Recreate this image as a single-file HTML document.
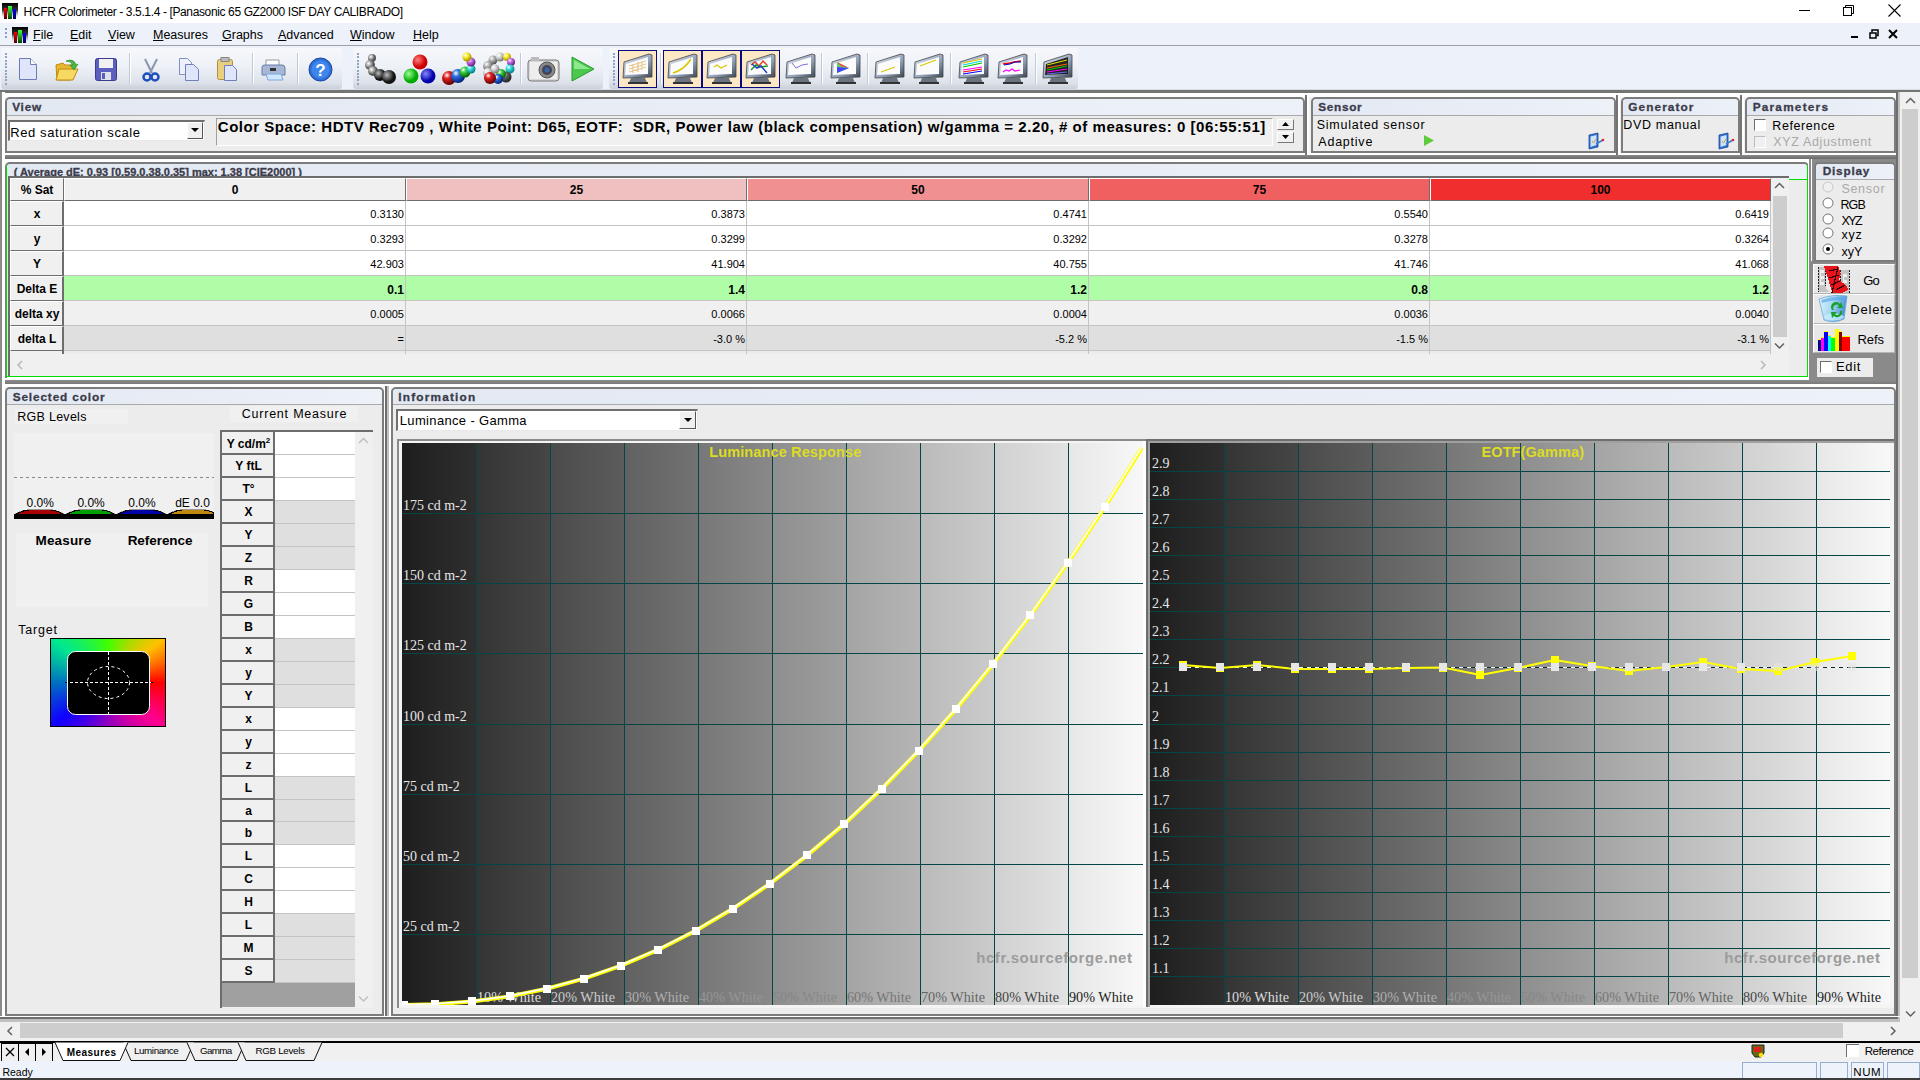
<!DOCTYPE html><html><head><meta charset="utf-8"><style>
html,body{margin:0;padding:0;width:1920px;height:1080px;overflow:hidden;background:#f0f0f0;}
body{position:relative;font-family:"Liberation Sans",sans-serif;font-size:12px;color:#000;}
div{box-sizing:border-box;}
.hd{font-weight:bold;color:#3c3c48;font-size:12px;}
</style></head><body>
<div style="position:absolute;left:0px;top:0px;width:1920px;height:23px;background:#fff;"></div>
<svg style="position:absolute;left:2px;top:3px" width="16" height="16" shape-rendering="crispEdges">
<defs><linearGradient id="aib2" x1="0" y1="0" x2="0" y2="1"><stop offset="0" stop-color="#000"/><stop offset="0.45" stop-color="#333"/><stop offset="1" stop-color="#fff" stop-opacity="0"/></linearGradient>
<linearGradient id="air2" x1="0" y1="0" x2="0" y2="1"><stop offset="0" stop-color="#ff0000"/><stop offset="1" stop-color="#500000"/></linearGradient>
<linearGradient id="aig2" x1="0" y1="0" x2="0" y2="1"><stop offset="0" stop-color="#40ff40"/><stop offset="1" stop-color="#004000"/></linearGradient>
<linearGradient id="aia2" x1="0" y1="0" x2="0" y2="1"><stop offset="0" stop-color="#0000ff"/><stop offset="1" stop-color="#000050"/></linearGradient></defs>
<rect x="0" y="0" width="16" height="16" fill="url(#aib2)"/>
<rect x="2" y="5" width="3" height="11" fill="url(#air2)"/><rect x="6" y="3" width="4" height="13" fill="url(#aig2)"/><rect x="11" y="6" width="3" height="10" fill="url(#aia2)"/></svg>
<div style="position:absolute;left:23.60px;top:5.20px;white-space:pre;font-size:12px;color:#000;letter-spacing:-0.373px;">HCFR Colorimeter - 3.5.1.4 - [Panasonic 65 GZ2000 ISF DAY CALIBRADO]</div>
<div style="position:absolute;left:1799px;top:10px;width:11px;height:1px;background:#000;"></div>
<svg style="position:absolute;left:1843px;top:5px" width="12" height="12"><rect x="0.5" y="2.5" width="8" height="8" fill="none" stroke="#000"/><path d="M2.5 2.5V0.5H10.5V8.5H8.5" fill="none" stroke="#000"/></svg>
<svg style="position:absolute;left:1888px;top:4px" width="13" height="13"><path d="M0.5 0.5L12.5 12.5M12.5 0.5L0.5 12.5" stroke="#000" stroke-width="1.1"/></svg>
<div style="position:absolute;left:0px;top:23px;width:1920px;height:22px;background:#edf1f9;"></div>
<div style="position:absolute;left:0px;top:45px;width:1920px;height:1px;background:#a0a0a0;"></div>
<div style="position:absolute;left:0px;top:46px;width:1920px;height:44px;background:#edf1f9;"></div>
<div style="position:absolute;left:5px;top:28px;width:2px;height:2px;background:#8aa0c0;"></div>
<div style="position:absolute;left:5px;top:32px;width:2px;height:2px;background:#8aa0c0;"></div>
<div style="position:absolute;left:5px;top:36px;width:2px;height:2px;background:#8aa0c0;"></div>
<svg style="position:absolute;left:12px;top:27px" width="16" height="16" shape-rendering="crispEdges">
<defs><linearGradient id="aib12" x1="0" y1="0" x2="0" y2="1"><stop offset="0" stop-color="#000"/><stop offset="0.45" stop-color="#333"/><stop offset="1" stop-color="#fff" stop-opacity="0"/></linearGradient>
<linearGradient id="air12" x1="0" y1="0" x2="0" y2="1"><stop offset="0" stop-color="#ff0000"/><stop offset="1" stop-color="#500000"/></linearGradient>
<linearGradient id="aig12" x1="0" y1="0" x2="0" y2="1"><stop offset="0" stop-color="#40ff40"/><stop offset="1" stop-color="#004000"/></linearGradient>
<linearGradient id="aia12" x1="0" y1="0" x2="0" y2="1"><stop offset="0" stop-color="#0000ff"/><stop offset="1" stop-color="#000050"/></linearGradient></defs>
<rect x="0" y="0" width="16" height="16" fill="url(#aib12)"/>
<rect x="2" y="5" width="3" height="11" fill="url(#air12)"/><rect x="6" y="3" width="4" height="13" fill="url(#aig12)"/><rect x="11" y="6" width="3" height="10" fill="url(#aia12)"/></svg>
<div style="position:absolute;left:33px;top:28px;font-size:12.5px;white-space:pre;"><u>F</u>ile</div>
<div style="position:absolute;left:70px;top:28px;font-size:12.5px;white-space:pre;"><u>E</u>dit</div>
<div style="position:absolute;left:108px;top:28px;font-size:12.5px;white-space:pre;"><u>V</u>iew</div>
<div style="position:absolute;left:153px;top:28px;font-size:12.5px;white-space:pre;"><u>M</u>easures</div>
<div style="position:absolute;left:222px;top:28px;font-size:12.5px;white-space:pre;"><u>G</u>raphs</div>
<div style="position:absolute;left:278px;top:28px;font-size:12.5px;white-space:pre;"><u>A</u>dvanced</div>
<div style="position:absolute;left:350px;top:28px;font-size:12.5px;white-space:pre;"><u>W</u>indow</div>
<div style="position:absolute;left:413px;top:28px;font-size:12.5px;white-space:pre;"><u>H</u>elp</div>
<div style="position:absolute;left:1851px;top:36px;width:7px;height:2px;background:#000;"></div>
<svg style="position:absolute;left:1869px;top:29px" width="10" height="10"><rect x="1" y="4" width="6" height="5" fill="none" stroke="#000" stroke-width="1.5"/><path d="M3 3.5V1H9V6.5H7.5" fill="none" stroke="#000" stroke-width="1.5"/></svg>
<svg style="position:absolute;left:1888px;top:29px" width="10" height="10"><path d="M1 1L9 9M9 1L1 9" stroke="#000" stroke-width="2"/></svg>
<div style="position:absolute;left:1px;top:48px;width:341px;height:41px;background:linear-gradient(#f6f8fc 0%,#eef1f7 45%,#dde2ea 85%,#c9ced8 100%);border-radius:3px 3px 3px 3px;"></div>
<div style="position:absolute;left:5px;top:53.0px;width:2px;height:2px;background:#8da4c6;"></div>
<div style="position:absolute;left:5px;top:56.3px;width:2px;height:2px;background:#8da4c6;"></div>
<div style="position:absolute;left:5px;top:59.6px;width:2px;height:2px;background:#8da4c6;"></div>
<div style="position:absolute;left:5px;top:62.9px;width:2px;height:2px;background:#8da4c6;"></div>
<div style="position:absolute;left:5px;top:66.2px;width:2px;height:2px;background:#8da4c6;"></div>
<div style="position:absolute;left:5px;top:69.5px;width:2px;height:2px;background:#8da4c6;"></div>
<div style="position:absolute;left:5px;top:72.8px;width:2px;height:2px;background:#8da4c6;"></div>
<div style="position:absolute;left:5px;top:76.1px;width:2px;height:2px;background:#8da4c6;"></div>
<div style="position:absolute;left:5px;top:79.4px;width:2px;height:2px;background:#8da4c6;"></div>
<div style="position:absolute;left:5px;top:82.7px;width:2px;height:2px;background:#8da4c6;"></div>
<div style="position:absolute;left:353px;top:48px;width:250px;height:41px;background:linear-gradient(#f6f8fc 0%,#eef1f7 45%,#dde2ea 85%,#c9ced8 100%);border-radius:3px 3px 3px 3px;"></div>
<div style="position:absolute;left:357px;top:53.0px;width:2px;height:2px;background:#8da4c6;"></div>
<div style="position:absolute;left:357px;top:56.3px;width:2px;height:2px;background:#8da4c6;"></div>
<div style="position:absolute;left:357px;top:59.6px;width:2px;height:2px;background:#8da4c6;"></div>
<div style="position:absolute;left:357px;top:62.9px;width:2px;height:2px;background:#8da4c6;"></div>
<div style="position:absolute;left:357px;top:66.2px;width:2px;height:2px;background:#8da4c6;"></div>
<div style="position:absolute;left:357px;top:69.5px;width:2px;height:2px;background:#8da4c6;"></div>
<div style="position:absolute;left:357px;top:72.8px;width:2px;height:2px;background:#8da4c6;"></div>
<div style="position:absolute;left:357px;top:76.1px;width:2px;height:2px;background:#8da4c6;"></div>
<div style="position:absolute;left:357px;top:79.4px;width:2px;height:2px;background:#8da4c6;"></div>
<div style="position:absolute;left:357px;top:82.7px;width:2px;height:2px;background:#8da4c6;"></div>
<div style="position:absolute;left:609px;top:48px;width:469px;height:41px;background:linear-gradient(#f6f8fc 0%,#eef1f7 45%,#dde2ea 85%,#c9ced8 100%);border-radius:3px 3px 3px 3px;"></div>
<div style="position:absolute;left:613px;top:53.0px;width:2px;height:2px;background:#8da4c6;"></div>
<div style="position:absolute;left:613px;top:56.3px;width:2px;height:2px;background:#8da4c6;"></div>
<div style="position:absolute;left:613px;top:59.6px;width:2px;height:2px;background:#8da4c6;"></div>
<div style="position:absolute;left:613px;top:62.9px;width:2px;height:2px;background:#8da4c6;"></div>
<div style="position:absolute;left:613px;top:66.2px;width:2px;height:2px;background:#8da4c6;"></div>
<div style="position:absolute;left:613px;top:69.5px;width:2px;height:2px;background:#8da4c6;"></div>
<div style="position:absolute;left:613px;top:72.8px;width:2px;height:2px;background:#8da4c6;"></div>
<div style="position:absolute;left:613px;top:76.1px;width:2px;height:2px;background:#8da4c6;"></div>
<div style="position:absolute;left:613px;top:79.4px;width:2px;height:2px;background:#8da4c6;"></div>
<div style="position:absolute;left:613px;top:82.7px;width:2px;height:2px;background:#8da4c6;"></div>
<div style="position:absolute;left:0px;top:89px;width:1920px;height:1px;background:#d8dce4;"></div>
<div style="position:absolute;left:0px;top:90px;width:1920px;height:3px;background:#747474;"></div>
<div style="position:absolute;left:0px;top:93px;width:1920px;height:2px;background:#fff;"></div>
<svg style="position:absolute;left:18px;top:57px" width="20" height="24"><path d="M1.5 1.5H12.5L18.5 7.5V22.5H1.5Z" fill="#dfe6fb" stroke="#6b7cb8"/><path d="M12.5 1.5V7.5H18.5" fill="#fff" stroke="#6b7cb8"/></svg>
<svg style="position:absolute;left:54px;top:57px" width="26" height="24"><path d="M2 8L9 6L11 8H20L17 23H3Z" fill="#e8b830" stroke="#c08a10"/><path d="M5 12H24L19 23H2Z" fill="#f7d860" stroke="#c08a10"/><path d="M12 4Q20 1 22 8L24 7L20 13L16 8L19 8Q17 4 12 4Z" fill="#4cb848" stroke="#2a8a2a" stroke-width="0.7"/></svg>
<svg style="position:absolute;left:95px;top:58px" width="22" height="23"><rect x="0.5" y="0.5" width="21" height="22" rx="2" fill="#5b5fbf" stroke="#3a3d8a"/><rect x="4" y="1" width="14" height="9" fill="#f0f0f0"/><rect x="6" y="14" width="10" height="8" fill="#e0e0e8"/><rect x="7" y="15" width="3" height="6" fill="#5b5fbf"/></svg>
<div style="position:absolute;left:129px;top:53px;width:1px;height:31px;background:#c3cad6;"></div>
<div style="position:absolute;left:130px;top:53px;width:1px;height:31px;background:#fff;"></div>
<svg style="position:absolute;left:142px;top:58px" width="18" height="24"><path d="M3 1L10 15M15 1L8 15" stroke="#8896b0" stroke-width="2"/><circle cx="5" cy="19" r="3.5" fill="none" stroke="#1e4fbf" stroke-width="2.5"/><circle cx="13" cy="19" r="3.5" fill="none" stroke="#1e4fbf" stroke-width="2.5"/></svg>
<svg style="position:absolute;left:178px;top:57px" width="22" height="25"><path d="M1.5 1.5H9.5L13.5 5.5V17.5H1.5Z" fill="#eef1fb" stroke="#8090c0"/><path d="M7.5 7.5H15.5L20.5 12.5V23.5H7.5Z" fill="#dfe6fb" stroke="#7080b8"/></svg>
<svg style="position:absolute;left:216px;top:57px" width="22" height="25"><rect x="1.5" y="2.5" width="15" height="20" rx="2" fill="#e9d080" stroke="#b09040"/><rect x="5" y="0.5" width="8" height="4" fill="#bbb" stroke="#888"/><path d="M8.5 8.5H16.5L20.5 12.5V23.5H8.5Z" fill="#dfe6fb" stroke="#7080b8"/></svg>
<div style="position:absolute;left:252px;top:53px;width:1px;height:31px;background:#c3cad6;"></div>
<div style="position:absolute;left:253px;top:53px;width:1px;height:31px;background:#fff;"></div>
<svg style="position:absolute;left:261px;top:58px" width="25" height="23"><path d="M5 2H18V10H5Z" fill="#fff" stroke="#999"/><path d="M1 9Q1 7 4 7H21Q24 7 24 10V17H1Z" fill="#a9b7d6" stroke="#6c7ca8"/><rect x="9" y="10" width="6" height="3" fill="#333"/><path d="M5 16H20L22 22H7Z" fill="#cfe8ff" stroke="#7fa6d8"/></svg>
<div style="position:absolute;left:297px;top:53px;width:1px;height:31px;background:#c3cad6;"></div>
<div style="position:absolute;left:298px;top:53px;width:1px;height:31px;background:#fff;"></div>
<svg style="position:absolute;left:308px;top:57px" width="25" height="25"><circle cx="12.5" cy="12.5" r="11.5" fill="#2f6fd8" stroke="#1a47a0"/><circle cx="12.5" cy="12.5" r="9" fill="#3f86ec"/><text x="12.5" y="19" font-family="Liberation Sans" font-weight="bold" font-size="17" fill="#fff" text-anchor="middle">?</text></svg>
<svg style="position:absolute;left:363px;top:52px" width="36" height="34">
<defs><radialGradient id="gb" cx="35%" cy="35%"><stop offset="0" stop-color="#fff"/><stop offset="1" stop-color="#555"/></radialGradient>
<radialGradient id="gk" cx="35%" cy="35%"><stop offset="0" stop-color="#bbb"/><stop offset="1" stop-color="#111"/></radialGradient></defs>
<circle cx="9" cy="6" r="4" fill="url(#gb)"/><circle cx="7" cy="13" r="5" fill="url(#gb)"/><circle cx="10" cy="19" r="5" fill="url(#gb)"/><circle cx="17" cy="23" r="6" fill="url(#gk)"/><circle cx="26" cy="25" r="7" fill="url(#gk)"/></svg>
<svg style="position:absolute;left:402px;top:52px" width="36" height="34">
<defs><radialGradient id="rr" cx="35%" cy="35%"><stop offset="0" stop-color="#ff8080"/><stop offset="1" stop-color="#c00"/></radialGradient>
<radialGradient id="rg" cx="35%" cy="35%"><stop offset="0" stop-color="#9f9"/><stop offset="1" stop-color="#0a0"/></radialGradient>
<radialGradient id="rb" cx="35%" cy="35%"><stop offset="0" stop-color="#88f"/><stop offset="1" stop-color="#00a"/></radialGradient></defs>
<circle cx="18" cy="10" r="7.5" fill="url(#rr)"/><circle cx="9" cy="24" r="7.5" fill="url(#rg)"/><circle cx="26" cy="24" r="7.5" fill="url(#rb)"/></svg>
<svg style="position:absolute;left:0;top:0" width="0" height="0"><defs><radialGradient id="g_ffee30" cx="35%" cy="30%" r="70%"><stop offset="0" stop-color="#fff"/><stop offset="0.35" stop-color="#ffee30"/><stop offset="1" stop-color="#a09000"/></radialGradient><radialGradient id="g_d070f0" cx="35%" cy="30%" r="70%"><stop offset="0" stop-color="#fff"/><stop offset="0.35" stop-color="#d070f0"/><stop offset="1" stop-color="#602080"/></radialGradient><radialGradient id="g_40e0e0" cx="35%" cy="30%" r="70%"><stop offset="0" stop-color="#fff"/><stop offset="0.35" stop-color="#40e0e0"/><stop offset="1" stop-color="#008080"/></radialGradient><radialGradient id="g_40d040" cx="35%" cy="30%" r="70%"><stop offset="0" stop-color="#fff"/><stop offset="0.35" stop-color="#40d040"/><stop offset="1" stop-color="#006000"/></radialGradient><radialGradient id="g_3070e0" cx="35%" cy="30%" r="70%"><stop offset="0" stop-color="#fff"/><stop offset="0.35" stop-color="#3070e0"/><stop offset="1" stop-color="#002080"/></radialGradient><radialGradient id="g_e02020" cx="35%" cy="30%" r="70%"><stop offset="0" stop-color="#fff"/><stop offset="0.35" stop-color="#e02020"/><stop offset="1" stop-color="#600000"/></radialGradient><radialGradient id="g_dddddd" cx="35%" cy="30%" r="70%"><stop offset="0" stop-color="#fff"/><stop offset="0.35" stop-color="#dddddd"/><stop offset="1" stop-color="#777"/></radialGradient><radialGradient id="g_bbbbbb" cx="35%" cy="30%" r="70%"><stop offset="0" stop-color="#fff"/><stop offset="0.35" stop-color="#bbbbbb"/><stop offset="1" stop-color="#555"/></radialGradient><radialGradient id="g_666666" cx="35%" cy="30%" r="70%"><stop offset="0" stop-color="#fff"/><stop offset="0.35" stop-color="#666666"/><stop offset="1" stop-color="#222"/></radialGradient></defs></svg>
<svg style="position:absolute;left:441px;top:52px" width="36" height="34"><circle cx="8" cy="26" r="7" fill="url(#g_e02020)"/><circle cx="17" cy="24" r="7" fill="url(#g_3070e0)"/><circle cx="24" cy="20" r="5.5" fill="url(#g_40d040)"/><circle cx="30" cy="17" r="4.5" fill="url(#g_40e0e0)"/><circle cx="30" cy="10" r="4.5" fill="url(#g_d070f0)"/><circle cx="26" cy="5" r="4.5" fill="url(#g_ffee30)"/></svg>
<svg style="position:absolute;left:480px;top:52px" width="36" height="34"><circle cx="13" cy="8" r="4.5" fill="url(#g_bbbbbb)"/><circle cx="20" cy="5" r="4.5" fill="url(#g_dddddd)"/><circle cx="27" cy="5" r="4" fill="url(#g_ffee30)"/><circle cx="31" cy="10" r="4" fill="url(#g_d070f0)"/><circle cx="30" cy="17" r="4.5" fill="url(#g_40e0e0)"/><circle cx="8" cy="14" r="5" fill="url(#g_bbbbbb)"/><circle cx="8" cy="21" r="5" fill="url(#g_dddddd)"/><circle cx="26" cy="25" r="5.5" fill="url(#g_666666)"/><circle cx="21" cy="22" r="5" fill="url(#g_40d040)"/><circle cx="18" cy="27" r="5" fill="url(#g_3070e0)"/><circle cx="10" cy="26" r="6" fill="url(#g_e02020)"/><circle cx="15" cy="17" r="4.5" fill="url(#g_dddddd)"/></svg>
<div style="position:absolute;left:520px;top:53px;width:1px;height:31px;background:#c3cad6;"></div>
<div style="position:absolute;left:521px;top:53px;width:1px;height:31px;background:#fff;"></div>
<svg style="position:absolute;left:527px;top:55px" width="34" height="30">
<rect x="1" y="5" width="31" height="21" rx="3" fill="#d8d8d8" stroke="#777"/><rect x="3" y="7" width="27" height="17" fill="#eee"/><circle cx="20" cy="15" r="8" fill="#888" stroke="#555"/><circle cx="20" cy="15" r="5" fill="#445"/><circle cx="20" cy="15" r="2.5" fill="#36a"/><rect x="4" y="2" width="8" height="4" fill="#bbb"/></svg>
<svg style="position:absolute;left:570px;top:55px" width="26" height="28"><path d="M2 2L24 14L2 26Z" fill="#4cc84c" stroke="#2a9a2a"/><path d="M4 5L20 14L4 14Z" fill="#8fe88f"/></svg>
<div style="position:absolute;left:618px;top:50px;width:39px;height:38px;background:#fde8c6;border:1.5px solid #0a0a80;"></div>
<svg style="position:absolute;left:621px;top:52px" width="33" height="34">
<defs><linearGradient id="mf618" x1="0" y1="0" x2="1" y2="1"><stop offset="0" stop-color="#e8eef8"/><stop offset="0.6" stop-color="#8fa0b8"/><stop offset="1" stop-color="#39424e"/></linearGradient></defs>
<path d="M3 10L28 2L31 3V25L2 26Z" fill="url(#mf618)" stroke="#444" stroke-width="0.8"/>
<path d="M5 12L27 5V22L4 23Z" fill="#fbfbfb"/>
<g stroke="#e8c890" stroke-width="1.2"><path d="M8 14L25 9M8 17L25 12M8 20L25 15M12 12V21M17 10V20M21 9V18"/></g>
<path d="M10 26H24L26 31H8Z" fill="#6a7480"/><rect x="7" y="30" width="20" height="2" fill="#333"/></svg>
<div style="position:absolute;left:660px;top:53px;width:1px;height:31px;background:#c3cad6;"></div>
<div style="position:absolute;left:661px;top:53px;width:1px;height:31px;background:#fff;"></div>
<div style="position:absolute;left:663px;top:50px;width:39px;height:38px;background:#fde8c6;border:1.5px solid #0a0a80;"></div>
<svg style="position:absolute;left:666px;top:52px" width="33" height="34">
<defs><linearGradient id="mf663" x1="0" y1="0" x2="1" y2="1"><stop offset="0" stop-color="#e8eef8"/><stop offset="0.6" stop-color="#8fa0b8"/><stop offset="1" stop-color="#39424e"/></linearGradient></defs>
<path d="M3 10L28 2L31 3V25L2 26Z" fill="url(#mf663)" stroke="#444" stroke-width="0.8"/>
<path d="M5 12L27 5V22L4 23Z" fill="#fbfbfb"/>
<path d="M7 21Q18 18 25 7" stroke="#d8c800" stroke-width="1.5" fill="none"/>
<path d="M10 26H24L26 31H8Z" fill="#6a7480"/><rect x="7" y="30" width="20" height="2" fill="#333"/></svg>
<div style="position:absolute;left:702px;top:50px;width:39px;height:38px;background:#fde8c6;border:1.5px solid #0a0a80;"></div>
<svg style="position:absolute;left:705px;top:52px" width="33" height="34">
<defs><linearGradient id="mf702" x1="0" y1="0" x2="1" y2="1"><stop offset="0" stop-color="#e8eef8"/><stop offset="0.6" stop-color="#8fa0b8"/><stop offset="1" stop-color="#39424e"/></linearGradient></defs>
<path d="M3 10L28 2L31 3V25L2 26Z" fill="url(#mf702)" stroke="#444" stroke-width="0.8"/>
<path d="M5 12L27 5V22L4 23Z" fill="#fbfbfb"/>
<path d="M9 15L12 13L16 16L20 14L22 13" stroke="#d8c800" stroke-width="1.3" fill="none"/>
<path d="M10 26H24L26 31H8Z" fill="#6a7480"/><rect x="7" y="30" width="20" height="2" fill="#333"/></svg>
<div style="position:absolute;left:741px;top:50px;width:39px;height:38px;background:#fde8c6;border:1.5px solid #0a0a80;"></div>
<svg style="position:absolute;left:744px;top:52px" width="33" height="34">
<defs><linearGradient id="mf741" x1="0" y1="0" x2="1" y2="1"><stop offset="0" stop-color="#e8eef8"/><stop offset="0.6" stop-color="#8fa0b8"/><stop offset="1" stop-color="#39424e"/></linearGradient></defs>
<path d="M3 10L28 2L31 3V25L2 26Z" fill="url(#mf741)" stroke="#444" stroke-width="0.8"/>
<path d="M5 12L27 5V22L4 23Z" fill="#fbfbfb"/>
<path d="M7 13L11 10L15 14L19 9L23 13" stroke="#e04020" stroke-width="1.5" fill="none"/><path d="M7 18L12 13L16 15L24 14" stroke="#20a020" stroke-width="1.5" fill="none"/><path d="M8 12L13 16L17 14L23 21" stroke="#2040c0" stroke-width="1.5" fill="none"/>
<path d="M10 26H24L26 31H8Z" fill="#6a7480"/><rect x="7" y="30" width="20" height="2" fill="#333"/></svg>
<svg style="position:absolute;left:784px;top:52px" width="33" height="34">
<defs><linearGradient id="mf781" x1="0" y1="0" x2="1" y2="1"><stop offset="0" stop-color="#e8eef8"/><stop offset="0.6" stop-color="#8fa0b8"/><stop offset="1" stop-color="#39424e"/></linearGradient></defs>
<path d="M3 10L28 2L31 3V25L2 26Z" fill="url(#mf781)" stroke="#444" stroke-width="0.8"/>
<path d="M5 12L27 5V22L4 23Z" fill="#fbfbfb"/>
<path d="M8 11L12 16L18 13L24 12" stroke="#8070e0" stroke-width="1" fill="none"/>
<path d="M10 26H24L26 31H8Z" fill="#6a7480"/><rect x="7" y="30" width="20" height="2" fill="#333"/></svg>
<div style="position:absolute;left:821px;top:53px;width:1px;height:31px;background:#c3cad6;"></div>
<div style="position:absolute;left:822px;top:53px;width:1px;height:31px;background:#fff;"></div>
<svg style="position:absolute;left:829px;top:52px" width="33" height="34">
<defs><linearGradient id="mf826" x1="0" y1="0" x2="1" y2="1"><stop offset="0" stop-color="#e8eef8"/><stop offset="0.6" stop-color="#8fa0b8"/><stop offset="1" stop-color="#39424e"/></linearGradient></defs>
<path d="M3 10L28 2L31 3V25L2 26Z" fill="url(#mf826)" stroke="#444" stroke-width="0.8"/>
<path d="M5 12L27 5V22L4 23Z" fill="#fbfbfb"/>
<path d="M8 10L20 16L8 21Z" fill="#6c6"/><path d="M8 10L20 16L12 14Z" fill="#f44"/><path d="M8 15L20 16L8 21Z" fill="#44f"/>
<path d="M10 26H24L26 31H8Z" fill="#6a7480"/><rect x="7" y="30" width="20" height="2" fill="#333"/></svg>
<div style="position:absolute;left:867px;top:53px;width:1px;height:31px;background:#c3cad6;"></div>
<div style="position:absolute;left:868px;top:53px;width:1px;height:31px;background:#fff;"></div>
<svg style="position:absolute;left:873px;top:52px" width="33" height="34">
<defs><linearGradient id="mf870" x1="0" y1="0" x2="1" y2="1"><stop offset="0" stop-color="#e8eef8"/><stop offset="0.6" stop-color="#8fa0b8"/><stop offset="1" stop-color="#39424e"/></linearGradient></defs>
<path d="M3 10L28 2L31 3V25L2 26Z" fill="url(#mf870)" stroke="#444" stroke-width="0.8"/>
<path d="M5 12L27 5V22L4 23Z" fill="#fbfbfb"/>
<path d="M8 20L22 15" stroke="#d8c800" stroke-width="1.2"/>
<path d="M10 26H24L26 31H8Z" fill="#6a7480"/><rect x="7" y="30" width="20" height="2" fill="#333"/></svg>
<svg style="position:absolute;left:912px;top:52px" width="33" height="34">
<defs><linearGradient id="mf909" x1="0" y1="0" x2="1" y2="1"><stop offset="0" stop-color="#e8eef8"/><stop offset="0.6" stop-color="#8fa0b8"/><stop offset="1" stop-color="#39424e"/></linearGradient></defs>
<path d="M3 10L28 2L31 3V25L2 26Z" fill="url(#mf909)" stroke="#444" stroke-width="0.8"/>
<path d="M5 12L27 5V22L4 23Z" fill="#fbfbfb"/>
<path d="M8 14L24 8" stroke="#d8c800" stroke-width="1.2"/>
<path d="M10 26H24L26 31H8Z" fill="#6a7480"/><rect x="7" y="30" width="20" height="2" fill="#333"/></svg>
<div style="position:absolute;left:950px;top:53px;width:1px;height:31px;background:#c3cad6;"></div>
<div style="position:absolute;left:951px;top:53px;width:1px;height:31px;background:#fff;"></div>
<svg style="position:absolute;left:957px;top:52px" width="33" height="34">
<defs><linearGradient id="mf954" x1="0" y1="0" x2="1" y2="1"><stop offset="0" stop-color="#e8eef8"/><stop offset="0.6" stop-color="#8fa0b8"/><stop offset="1" stop-color="#39424e"/></linearGradient></defs>
<path d="M3 10L28 2L31 3V25L2 26Z" fill="url(#mf954)" stroke="#444" stroke-width="0.8"/>
<path d="M5 12L27 5V22L4 23Z" fill="#fbfbfb"/>
<g stroke-width="1.2"><path d="M6 11L25 7" stroke="#d8c800"/><path d="M6 13L25 9" stroke="#0dd"/><path d="M6 15L25 11" stroke="#0c0"/><path d="M6 18L25 15" stroke="#f0f"/><path d="M6 20L25 17" stroke="#f00"/><path d="M6 22L25 19" stroke="#00f"/></g>
<path d="M10 26H24L26 31H8Z" fill="#6a7480"/><rect x="7" y="30" width="20" height="2" fill="#333"/></svg>
<svg style="position:absolute;left:996px;top:52px" width="33" height="34">
<defs><linearGradient id="mf993" x1="0" y1="0" x2="1" y2="1"><stop offset="0" stop-color="#e8eef8"/><stop offset="0.6" stop-color="#8fa0b8"/><stop offset="1" stop-color="#39424e"/></linearGradient></defs>
<path d="M3 10L28 2L31 3V25L2 26Z" fill="url(#mf993)" stroke="#444" stroke-width="0.8"/>
<path d="M5 12L27 5V22L4 23Z" fill="#fbfbfb"/>
<path d="M7 12L14 11L18 10L25 9" stroke="#e00" stroke-width="1.5"/><path d="M8 13L14 12L19 10L25 10" stroke="#00c" stroke-width="1" fill="none"/><path d="M7 20L10 18L13 19L16 17L19 19L24 18" stroke="#f0f" stroke-width="1.2" fill="none"/>
<path d="M10 26H24L26 31H8Z" fill="#6a7480"/><rect x="7" y="30" width="20" height="2" fill="#333"/></svg>
<div style="position:absolute;left:1035px;top:53px;width:1px;height:31px;background:#c3cad6;"></div>
<div style="position:absolute;left:1036px;top:53px;width:1px;height:31px;background:#fff;"></div>
<svg style="position:absolute;left:1041px;top:52px" width="33" height="34">
<defs><linearGradient id="mf1038" x1="0" y1="0" x2="1" y2="1"><stop offset="0" stop-color="#e8eef8"/><stop offset="0.6" stop-color="#8fa0b8"/><stop offset="1" stop-color="#39424e"/></linearGradient></defs>
<path d="M3 10L28 2L31 3V25L2 26Z" fill="url(#mf1038)" stroke="#444" stroke-width="0.8"/>
<path d="M5 12L27 5V22L4 23Z" fill="#fbfbfb"/>
<path d="M5 12L27 5V22L4 23Z" fill="#222"/><g stroke-width="1.1"><path d="M6 13L26 8" stroke="#dd0"/><path d="M6 16L26 12" stroke="#f60"/><path d="M6 18L26 14" stroke="#0c0"/><path d="M6 20L26 17" stroke="#f0f"/><path d="M6 22L26 20" stroke="#66f"/></g>
<path d="M10 26H24L26 31H8Z" fill="#6a7480"/><rect x="7" y="30" width="20" height="2" fill="#333"/></svg>
<div style="position:absolute;left:0px;top:94px;width:1900px;height:3px;background:#fff;"></div>
<div style="position:absolute;left:0px;top:153px;width:1900px;height:2px;background:#fff;"></div>
<div style="position:absolute;left:0px;top:155px;width:1900px;height:4px;background:linear-gradient(#8a8a8a,#6a6a6a);"></div>
<div style="position:absolute;left:0px;top:159px;width:1900px;height:3px;background:#fff;"></div>
<div style="position:absolute;left:0px;top:378px;width:1900px;height:2px;background:#fff;"></div>
<div style="position:absolute;left:0px;top:380px;width:1900px;height:4px;background:linear-gradient(#8c8c8c,#7a7a7a);"></div>
<div style="position:absolute;left:0px;top:384px;width:1900px;height:3px;background:#fff;"></div>
<div style="position:absolute;left:0px;top:92px;width:2px;height:930px;background:#8a8a8a;"></div>
<div style="position:absolute;left:2px;top:92px;width:3px;height:930px;background:#fff;"></div>
<div style="position:absolute;left:1896px;top:92px;width:2px;height:927px;background:#6e6e6e;"></div>
<div style="position:absolute;left:1898px;top:92px;width:3px;height:930px;background:#c0c0c0;"></div>
<div style="position:absolute;left:5px;top:97px;width:1300px;height:56px;background:#ececec;border:2px solid #7c7c7c;border-top-left-radius:5px;border-top-right-radius:5px;"></div>
<div style="position:absolute;left:7px;top:99px;width:1296px;height:17px;background:linear-gradient(90deg,#e3e9f3,#edf1f8);border-top-left-radius:4px;border-top-right-radius:4px;border-bottom:1px solid #a9a9a9;"></div>
<div style="position:absolute;left:12.20px;top:100.00px;white-space:pre;font-weight:bold;color:#3b3b4a;font-size:11.8px;-webkit-text-stroke:0.3px #3b3b4a;letter-spacing:0.767px;">View</div>
<div style="position:absolute;left:1305px;top:95px;width:2px;height:60px;background:#747474;"></div>
<div style="position:absolute;left:1307px;top:95px;width:2px;height:60px;background:#fff;"></div>
<div style="position:absolute;left:8px;top:120px;width:197px;height:21px;background:#fff;border-top:2px solid #6f6f6f;border-left:2px solid #6f6f6f;border-bottom:1px solid #e8e8e8;border-right:1px solid #e8e8e8;"></div>
<div style="position:absolute;left:10.30px;top:124.50px;white-space:pre;font-size:13px;letter-spacing:0.589px;">Red saturation scale</div>
<div style="position:absolute;left:187px;top:122px;width:16px;height:17px;background:#f0f0f0;border-right:1px solid #555;border-bottom:1px solid #555;border-top:1px solid #fff;border-left:1px solid #fff;"></div>
<svg style="position:absolute;left:191px;top:128px" width="8" height="5"><path d="M0 0H8L4 4Z" fill="#000"/></svg>
<div style="position:absolute;left:216px;top:118px;width:1057px;height:28px;background:#f0f0f0;border-left:1px solid #a0a0a0;border-top:1px solid #a0a0a0;border-right:1px solid #fff;border-bottom:1px solid #fff;"></div>
<div style="position:absolute;left:217.80px;top:118.00px;white-space:pre;font-size:15px;font-weight:bold;color:#000;letter-spacing:0.527px;">Color Space: HDTV Rec709 , White Point: D65, EOTF:  SDR, Power law (black compensation) w/gamma = 2.20, # of measures: 0 [06:55:51]</div>
<div style="position:absolute;left:1277px;top:119px;width:17px;height:11px;background:#f0f0f0;border-right:1px solid #777;border-bottom:1px solid #777;border-top:1px solid #fff;border-left:1px solid #fff;"></div>
<div style="position:absolute;left:1277px;top:132px;width:17px;height:11px;background:#f0f0f0;border-right:1px solid #777;border-bottom:1px solid #777;border-top:1px solid #fff;border-left:1px solid #fff;"></div>
<svg style="position:absolute;left:1282px;top:122px" width="7" height="4"><path d="M0 4H7L3.5 0Z" fill="#000"/></svg>
<svg style="position:absolute;left:1282px;top:135px" width="7" height="4"><path d="M0 0H7L3.5 4Z" fill="#000"/></svg>
<div style="position:absolute;left:1311px;top:97px;width:305px;height:56px;background:#ececec;border:2px solid #7c7c7c;border-top-left-radius:5px;border-top-right-radius:5px;"></div>
<div style="position:absolute;left:1313px;top:99px;width:301px;height:17px;background:linear-gradient(90deg,#e3e9f3,#edf1f8);border-top-left-radius:4px;border-top-right-radius:4px;border-bottom:1px solid #a9a9a9;"></div>
<div style="position:absolute;left:1318.30px;top:100.00px;white-space:pre;font-weight:bold;color:#3b3b4a;font-size:11.8px;-webkit-text-stroke:0.3px #3b3b4a;letter-spacing:0.660px;">Sensor</div>
<div style="position:absolute;left:1616px;top:95px;width:2px;height:60px;background:#747474;"></div>
<div style="position:absolute;left:1618px;top:95px;width:2px;height:60px;background:#fff;"></div>
<div style="position:absolute;left:1316.70px;top:117.70px;white-space:pre;font-size:12.5px;letter-spacing:0.753px;">Simulated sensor</div>
<div style="position:absolute;left:1318.30px;top:135.00px;white-space:pre;font-size:12.5px;letter-spacing:0.771px;">Adaptive</div>
<svg style="position:absolute;left:1423px;top:134px" width="12" height="13"><path d="M1 1L11 6.5L1 12Z" fill="#5ccc3c"/></svg>
<svg style="position:absolute;left:1587px;top:132px" width="18" height="18"><path d="M2 3L11 1V15L2 17Z" fill="#2f6fd0" stroke="#1b4a98" stroke-width="0.8"/><path d="M3.5 4.5L9.5 3V13L3.5 15Z" fill="#cfe4fa"/><path d="M5 9L6.5 11L9 7" stroke="#d8a030" fill="none"/><path d="M9 12L16 8" stroke="#3a7ad8" stroke-width="1.6"/><circle cx="16" cy="8" r="1.3" fill="#d03030"/></svg>
<div style="position:absolute;left:1621px;top:97px;width:119px;height:56px;background:#ececec;border:2px solid #7c7c7c;border-top-left-radius:5px;border-top-right-radius:5px;"></div>
<div style="position:absolute;left:1623px;top:99px;width:115px;height:17px;background:linear-gradient(90deg,#e3e9f3,#edf1f8);border-top-left-radius:4px;border-top-right-radius:4px;border-bottom:1px solid #a9a9a9;"></div>
<div style="position:absolute;left:1628.30px;top:100.00px;white-space:pre;font-weight:bold;color:#3b3b4a;font-size:11.8px;-webkit-text-stroke:0.3px #3b3b4a;letter-spacing:1.088px;">Generator</div>
<div style="position:absolute;left:1740px;top:95px;width:2px;height:60px;background:#747474;"></div>
<div style="position:absolute;left:1742px;top:95px;width:2px;height:60px;background:#fff;"></div>
<div style="position:absolute;left:1623.30px;top:117.70px;white-space:pre;font-size:12.5px;letter-spacing:0.667px;">DVD manual</div>
<svg style="position:absolute;left:1717px;top:132px" width="18" height="18"><path d="M2 3L11 1V15L2 17Z" fill="#2f6fd0" stroke="#1b4a98" stroke-width="0.8"/><path d="M3.5 4.5L9.5 3V13L3.5 15Z" fill="#cfe4fa"/><path d="M5 9L6.5 11L9 7" stroke="#d8a030" fill="none"/><path d="M9 12L16 8" stroke="#3a7ad8" stroke-width="1.6"/><circle cx="16" cy="8" r="1.3" fill="#d03030"/></svg>
<div style="position:absolute;left:1745px;top:97px;width:151px;height:56px;background:#ececec;border:2px solid #7c7c7c;border-top-left-radius:5px;border-top-right-radius:5px;"></div>
<div style="position:absolute;left:1747px;top:99px;width:147px;height:17px;background:linear-gradient(90deg,#e3e9f3,#edf1f8);border-top-left-radius:4px;border-top-right-radius:4px;border-bottom:1px solid #a9a9a9;"></div>
<div style="position:absolute;left:1752.70px;top:100.00px;white-space:pre;font-weight:bold;color:#3b3b4a;font-size:11.8px;-webkit-text-stroke:0.3px #3b3b4a;letter-spacing:1.222px;">Parameters</div>
<div style="position:absolute;left:1754px;top:119px;width:12px;height:12px;background:#fff;border-top:1px solid #6d6d6d;border-left:1px solid #6d6d6d;border-right:1px solid #fff;border-bottom:1px solid #fff;"></div>
<div style="position:absolute;left:1772.30px;top:118.70px;white-space:pre;font-size:12.5px;letter-spacing:0.588px;">Reference</div>
<div style="position:absolute;left:1754px;top:136px;width:12px;height:12px;background:#f0f0f0;border-top:1px solid #bdbdbd;border-left:1px solid #bdbdbd;border-right:1px solid #fff;border-bottom:1px solid #fff;"></div>
<div style="position:absolute;left:1773.30px;top:135.30px;white-space:pre;font-size:12.5px;color:#a8a8a8;letter-spacing:0.638px;">XYZ Adjustment</div>
<div style="position:absolute;left:5px;top:162px;width:1804px;height:216px;background:#ececec;border:2px solid #7c7c7c;border-top-left-radius:5px;border-top-right-radius:5px;"></div>
<div style="position:absolute;left:7px;top:164px;width:1800px;height:16px;background:linear-gradient(90deg,#e3e9f3,#edf1f8);border-top-left-radius:4px;border-top-right-radius:4px;"></div>
<div style="position:absolute;left:13.75px;top:165.80px;white-space:pre;font-size:11px;font-weight:bold;color:#3b3b4a;-webkit-text-stroke:0.3px #3b3b4a;letter-spacing:-0.005px;">( Average dE: 0.93 [0.59,0.38,0.35] max: 1.38 [CIE2000] )</div>
<div style="position:absolute;left:6px;top:165px;width:1px;height:212px;background:#00e000;"></div>
<div style="position:absolute;left:1807px;top:165px;width:1px;height:212px;background:#00e000;"></div>
<div style="position:absolute;left:6px;top:376px;width:1802px;height:1px;background:#00e000;"></div>
<div style="position:absolute;left:7px;top:377px;width:1801px;height:1px;background:#fff;"></div>
<div style="position:absolute;left:1789px;top:179px;width:18px;height:1px;background:#00e000;"></div>
<div style="position:absolute;left:8px;top:176px;width:1781px;height:200px;background:#f0f0f0;border-top:2px solid #6d6d6d;border-left:2px solid #6d6d6d;"></div>
<div style="position:absolute;left:10px;top:178px;width:54px;height:23px;background:#f0f0f0;border-top:1px solid #fff;border-left:1px solid #fff;border-right:1px solid #6d6d6d;border-bottom:1px solid #6d6d6d;"></div>
<div style="position:absolute;left:10px;top:183px;width:54px;text-align:center;font-weight:bold;font-size:12px;">% Sat</div>
<div style="position:absolute;left:64px;top:178px;width:342px;height:23px;background:#f0f0f0;border-top:1px solid #fff;border-left:1px solid #fff;border-right:1px solid #6d6d6d;border-bottom:1px solid #6d6d6d;"></div>
<div style="position:absolute;left:64px;top:183px;width:342px;text-align:center;font-weight:bold;font-size:12px;">0</div>
<div style="position:absolute;left:406px;top:178px;width:341px;height:23px;background:#f0c0c0;border-top:1px solid #fff;border-left:1px solid #fff;border-right:1px solid #6d6d6d;border-bottom:1px solid #6d6d6d;"></div>
<div style="position:absolute;left:406px;top:183px;width:341px;text-align:center;font-weight:bold;font-size:12px;">25</div>
<div style="position:absolute;left:747px;top:178px;width:342px;height:23px;background:#f09090;border-top:1px solid #fff;border-left:1px solid #fff;border-right:1px solid #6d6d6d;border-bottom:1px solid #6d6d6d;"></div>
<div style="position:absolute;left:747px;top:183px;width:342px;text-align:center;font-weight:bold;font-size:12px;">50</div>
<div style="position:absolute;left:1089px;top:178px;width:341px;height:23px;background:#f06060;border-top:1px solid #fff;border-left:1px solid #fff;border-right:1px solid #6d6d6d;border-bottom:1px solid #6d6d6d;"></div>
<div style="position:absolute;left:1089px;top:183px;width:341px;text-align:center;font-weight:bold;font-size:12px;">75</div>
<div style="position:absolute;left:1430px;top:178px;width:341px;height:23px;background:#f02e2e;border-top:1px solid #fff;border-left:1px solid #fff;border-right:1px solid #6d6d6d;border-bottom:1px solid #6d6d6d;"></div>
<div style="position:absolute;left:1430px;top:183px;width:341px;text-align:center;font-weight:bold;font-size:12px;">100</div>
<div style="position:absolute;left:10px;top:201px;width:54px;height:25px;background:#f0f0f0;border-top:1px solid #fff;border-left:1px solid #fff;border-right:2px solid #6d6d6d;border-bottom:1px solid #6d6d6d;"></div>
<div style="position:absolute;left:10px;top:207px;width:54px;text-align:center;font-weight:bold;font-size:12px;">x</div>
<div style="position:absolute;left:64px;top:201px;width:342px;height:25px;background:#fff;border-right:1px solid #c4c4c4;border-bottom:1px solid #c4c4c4;"></div>
<div style="position:absolute;left:64px;top:208px;width:340px;text-align:right;font-size:11px;">0.3130</div>
<div style="position:absolute;left:406px;top:201px;width:341px;height:25px;background:#fff;border-right:1px solid #c4c4c4;border-bottom:1px solid #c4c4c4;"></div>
<div style="position:absolute;left:406px;top:208px;width:339px;text-align:right;font-size:11px;">0.3873</div>
<div style="position:absolute;left:747px;top:201px;width:342px;height:25px;background:#fff;border-right:1px solid #c4c4c4;border-bottom:1px solid #c4c4c4;"></div>
<div style="position:absolute;left:747px;top:208px;width:340px;text-align:right;font-size:11px;">0.4741</div>
<div style="position:absolute;left:1089px;top:201px;width:341px;height:25px;background:#fff;border-right:1px solid #c4c4c4;border-bottom:1px solid #c4c4c4;"></div>
<div style="position:absolute;left:1089px;top:208px;width:339px;text-align:right;font-size:11px;">0.5540</div>
<div style="position:absolute;left:1430px;top:201px;width:341px;height:25px;background:#fff;border-right:1px solid #c4c4c4;border-bottom:1px solid #c4c4c4;"></div>
<div style="position:absolute;left:1430px;top:208px;width:339px;text-align:right;font-size:11px;">0.6419</div>
<div style="position:absolute;left:10px;top:226px;width:54px;height:25px;background:#f0f0f0;border-top:1px solid #fff;border-left:1px solid #fff;border-right:2px solid #6d6d6d;border-bottom:1px solid #6d6d6d;"></div>
<div style="position:absolute;left:10px;top:232px;width:54px;text-align:center;font-weight:bold;font-size:12px;">y</div>
<div style="position:absolute;left:64px;top:226px;width:342px;height:25px;background:#fff;border-right:1px solid #c4c4c4;border-bottom:1px solid #c4c4c4;"></div>
<div style="position:absolute;left:64px;top:233px;width:340px;text-align:right;font-size:11px;">0.3293</div>
<div style="position:absolute;left:406px;top:226px;width:341px;height:25px;background:#fff;border-right:1px solid #c4c4c4;border-bottom:1px solid #c4c4c4;"></div>
<div style="position:absolute;left:406px;top:233px;width:339px;text-align:right;font-size:11px;">0.3299</div>
<div style="position:absolute;left:747px;top:226px;width:342px;height:25px;background:#fff;border-right:1px solid #c4c4c4;border-bottom:1px solid #c4c4c4;"></div>
<div style="position:absolute;left:747px;top:233px;width:340px;text-align:right;font-size:11px;">0.3292</div>
<div style="position:absolute;left:1089px;top:226px;width:341px;height:25px;background:#fff;border-right:1px solid #c4c4c4;border-bottom:1px solid #c4c4c4;"></div>
<div style="position:absolute;left:1089px;top:233px;width:339px;text-align:right;font-size:11px;">0.3278</div>
<div style="position:absolute;left:1430px;top:226px;width:341px;height:25px;background:#fff;border-right:1px solid #c4c4c4;border-bottom:1px solid #c4c4c4;"></div>
<div style="position:absolute;left:1430px;top:233px;width:339px;text-align:right;font-size:11px;">0.3264</div>
<div style="position:absolute;left:10px;top:251px;width:54px;height:25px;background:#f0f0f0;border-top:1px solid #fff;border-left:1px solid #fff;border-right:2px solid #6d6d6d;border-bottom:1px solid #6d6d6d;"></div>
<div style="position:absolute;left:10px;top:257px;width:54px;text-align:center;font-weight:bold;font-size:12px;">Y</div>
<div style="position:absolute;left:64px;top:251px;width:342px;height:25px;background:#fff;border-right:1px solid #c4c4c4;border-bottom:1px solid #c4c4c4;"></div>
<div style="position:absolute;left:64px;top:258px;width:340px;text-align:right;font-size:11px;">42.903</div>
<div style="position:absolute;left:406px;top:251px;width:341px;height:25px;background:#fff;border-right:1px solid #c4c4c4;border-bottom:1px solid #c4c4c4;"></div>
<div style="position:absolute;left:406px;top:258px;width:339px;text-align:right;font-size:11px;">41.904</div>
<div style="position:absolute;left:747px;top:251px;width:342px;height:25px;background:#fff;border-right:1px solid #c4c4c4;border-bottom:1px solid #c4c4c4;"></div>
<div style="position:absolute;left:747px;top:258px;width:340px;text-align:right;font-size:11px;">40.755</div>
<div style="position:absolute;left:1089px;top:251px;width:341px;height:25px;background:#fff;border-right:1px solid #c4c4c4;border-bottom:1px solid #c4c4c4;"></div>
<div style="position:absolute;left:1089px;top:258px;width:339px;text-align:right;font-size:11px;">41.746</div>
<div style="position:absolute;left:1430px;top:251px;width:341px;height:25px;background:#fff;border-right:1px solid #c4c4c4;border-bottom:1px solid #c4c4c4;"></div>
<div style="position:absolute;left:1430px;top:258px;width:339px;text-align:right;font-size:11px;">41.068</div>
<div style="position:absolute;left:10px;top:276px;width:54px;height:25px;background:#f0f0f0;border-top:1px solid #fff;border-left:1px solid #fff;border-right:2px solid #6d6d6d;border-bottom:1px solid #6d6d6d;"></div>
<div style="position:absolute;left:10px;top:282px;width:54px;text-align:center;font-weight:bold;font-size:12px;">Delta E</div>
<div style="position:absolute;left:64px;top:276px;width:342px;height:25px;background:#b0fda8;border-right:1px solid #c4c4c4;border-bottom:1px solid #c4c4c4;"></div>
<div style="position:absolute;left:64px;top:283px;width:340px;text-align:right;font-weight:bold;font-size:12px;">0.1</div>
<div style="position:absolute;left:406px;top:276px;width:341px;height:25px;background:#b0fda8;border-right:1px solid #c4c4c4;border-bottom:1px solid #c4c4c4;"></div>
<div style="position:absolute;left:406px;top:283px;width:339px;text-align:right;font-weight:bold;font-size:12px;">1.4</div>
<div style="position:absolute;left:747px;top:276px;width:342px;height:25px;background:#b0fda8;border-right:1px solid #c4c4c4;border-bottom:1px solid #c4c4c4;"></div>
<div style="position:absolute;left:747px;top:283px;width:340px;text-align:right;font-weight:bold;font-size:12px;">1.2</div>
<div style="position:absolute;left:1089px;top:276px;width:341px;height:25px;background:#b0fda8;border-right:1px solid #c4c4c4;border-bottom:1px solid #c4c4c4;"></div>
<div style="position:absolute;left:1089px;top:283px;width:339px;text-align:right;font-weight:bold;font-size:12px;">0.8</div>
<div style="position:absolute;left:1430px;top:276px;width:341px;height:25px;background:#b0fda8;border-right:1px solid #c4c4c4;border-bottom:1px solid #c4c4c4;"></div>
<div style="position:absolute;left:1430px;top:283px;width:339px;text-align:right;font-weight:bold;font-size:12px;">1.2</div>
<div style="position:absolute;left:10px;top:301px;width:54px;height:25px;background:#f0f0f0;border-top:1px solid #fff;border-left:1px solid #fff;border-right:2px solid #6d6d6d;border-bottom:1px solid #6d6d6d;"></div>
<div style="position:absolute;left:10px;top:307px;width:54px;text-align:center;font-weight:bold;font-size:12px;">delta xy</div>
<div style="position:absolute;left:64px;top:301px;width:342px;height:25px;background:#f0f0f0;border-right:1px solid #c4c4c4;border-bottom:1px solid #c4c4c4;"></div>
<div style="position:absolute;left:64px;top:308px;width:340px;text-align:right;font-size:11px;">0.0005</div>
<div style="position:absolute;left:406px;top:301px;width:341px;height:25px;background:#f0f0f0;border-right:1px solid #c4c4c4;border-bottom:1px solid #c4c4c4;"></div>
<div style="position:absolute;left:406px;top:308px;width:339px;text-align:right;font-size:11px;">0.0066</div>
<div style="position:absolute;left:747px;top:301px;width:342px;height:25px;background:#f0f0f0;border-right:1px solid #c4c4c4;border-bottom:1px solid #c4c4c4;"></div>
<div style="position:absolute;left:747px;top:308px;width:340px;text-align:right;font-size:11px;">0.0004</div>
<div style="position:absolute;left:1089px;top:301px;width:341px;height:25px;background:#f0f0f0;border-right:1px solid #c4c4c4;border-bottom:1px solid #c4c4c4;"></div>
<div style="position:absolute;left:1089px;top:308px;width:339px;text-align:right;font-size:11px;">0.0036</div>
<div style="position:absolute;left:1430px;top:301px;width:341px;height:25px;background:#f0f0f0;border-right:1px solid #c4c4c4;border-bottom:1px solid #c4c4c4;"></div>
<div style="position:absolute;left:1430px;top:308px;width:339px;text-align:right;font-size:11px;">0.0040</div>
<div style="position:absolute;left:10px;top:326px;width:54px;height:25px;background:#f0f0f0;border-top:1px solid #fff;border-left:1px solid #fff;border-right:2px solid #6d6d6d;border-bottom:1px solid #6d6d6d;"></div>
<div style="position:absolute;left:10px;top:332px;width:54px;text-align:center;font-weight:bold;font-size:12px;">delta L</div>
<div style="position:absolute;left:64px;top:326px;width:342px;height:25px;background:#dfdfdf;border-right:1px solid #c4c4c4;border-bottom:1px solid #c4c4c4;"></div>
<div style="position:absolute;left:64px;top:333px;width:340px;text-align:right;font-size:11px;">=</div>
<div style="position:absolute;left:406px;top:326px;width:341px;height:25px;background:#dfdfdf;border-right:1px solid #c4c4c4;border-bottom:1px solid #c4c4c4;"></div>
<div style="position:absolute;left:406px;top:333px;width:339px;text-align:right;font-size:11px;">-3.0 %</div>
<div style="position:absolute;left:747px;top:326px;width:342px;height:25px;background:#dfdfdf;border-right:1px solid #c4c4c4;border-bottom:1px solid #c4c4c4;"></div>
<div style="position:absolute;left:747px;top:333px;width:340px;text-align:right;font-size:11px;">-5.2 %</div>
<div style="position:absolute;left:1089px;top:326px;width:341px;height:25px;background:#dfdfdf;border-right:1px solid #c4c4c4;border-bottom:1px solid #c4c4c4;"></div>
<div style="position:absolute;left:1089px;top:333px;width:339px;text-align:right;font-size:11px;">-1.5 %</div>
<div style="position:absolute;left:1430px;top:326px;width:341px;height:25px;background:#dfdfdf;border-right:1px solid #c4c4c4;border-bottom:1px solid #c4c4c4;"></div>
<div style="position:absolute;left:1430px;top:333px;width:339px;text-align:right;font-size:11px;">-3.1 %</div>
<div style="position:absolute;left:10px;top:351px;width:54px;height:3px;background:#f0f0f0;border-right:2px solid #6d6d6d;"></div>
<div style="position:absolute;left:64px;top:351px;width:342px;height:3px;background:#ececec;border-right:1px solid #c4c4c4;"></div>
<div style="position:absolute;left:406px;top:351px;width:341px;height:3px;background:#ececec;border-right:1px solid #c4c4c4;"></div>
<div style="position:absolute;left:747px;top:351px;width:342px;height:3px;background:#ececec;border-right:1px solid #c4c4c4;"></div>
<div style="position:absolute;left:1089px;top:351px;width:341px;height:3px;background:#ececec;border-right:1px solid #c4c4c4;"></div>
<div style="position:absolute;left:1430px;top:351px;width:341px;height:3px;background:#ececec;border-right:1px solid #c4c4c4;"></div>
<div style="position:absolute;left:10px;top:354px;width:1761px;height:20px;background:#f0f0f0;"></div>
<svg style="position:absolute;left:16px;top:360px" width="8" height="10"><path d="M6 1L2 5L6 9" stroke="#b8b8b8" stroke-width="1.5" fill="none"/></svg>
<svg style="position:absolute;left:1759px;top:360px" width="8" height="10"><path d="M2 1L6 5L2 9" stroke="#b8b8b8" stroke-width="1.5" fill="none"/></svg>
<div style="position:absolute;left:1771px;top:178px;width:18px;height:176px;background:#f0f0f0;"></div>
<div style="position:absolute;left:1773px;top:196px;width:14px;height:141px;background:#cdcdcd;"></div>
<svg style="position:absolute;left:1774px;top:182px" width="11" height="8"><path d="M1 6L5.5 1.5L10 6" stroke="#606060" stroke-width="1.5" fill="none"/></svg>
<svg style="position:absolute;left:1774px;top:342px" width="11" height="8"><path d="M1 1.5L5.5 6L10 1.5" stroke="#606060" stroke-width="1.5" fill="none"/></svg>
<div style="position:absolute;left:1808px;top:159px;width:1px;height:221px;background:#fff;"></div>
<div style="position:absolute;left:1809px;top:159px;width:87px;height:221px;background:#8a8a8a;"></div>
<div style="position:absolute;left:1811px;top:159px;width:1px;height:102px;background:#fff;"></div>
<div style="position:absolute;left:1814px;top:162px;width:82px;height:100px;background:#ececec;border:2px solid #7c7c7c;border-top-left-radius:5px;border-top-right-radius:5px;"></div>
<div style="position:absolute;left:1816px;top:164px;width:78px;height:16px;background:linear-gradient(90deg,#e3e9f3,#edf1f8);border-top-left-radius:4px;border-top-right-radius:4px;border-bottom:1px solid #a9a9a9;"></div>
<div style="position:absolute;left:1822.70px;top:164.30px;white-space:pre;font-weight:bold;color:#3b3b4a;font-size:11.8px;-webkit-text-stroke:0.3px #3b3b4a;letter-spacing:0.783px;">Display</div>
<div style="position:absolute;left:1822px;top:180.8px;width:66px;height:14px;background:#ececec;"></div>
<svg style="position:absolute;left:1822px;top:180.5px" width="12" height="12"><circle cx="6" cy="6" r="5" fill="#f0f0f0" stroke="#c8c8c8"/></svg>
<div style="position:absolute;left:1841.40px;top:181.80px;white-space:pre;font-size:12.5px;color:#a9a9a9;letter-spacing:0.720px;">Sensor</div>
<div style="position:absolute;left:1822px;top:197.1px;width:66px;height:14px;background:#ececec;"></div>
<svg style="position:absolute;left:1822px;top:196.79999999999998px" width="12" height="12"><circle cx="6" cy="6" r="5" fill="#fff" stroke="#777"/></svg>
<div style="position:absolute;left:1840.40px;top:198.10px;white-space:pre;font-size:12.5px;color:#000;letter-spacing:-0.800px;">RGB</div>
<div style="position:absolute;left:1822px;top:213.1px;width:66px;height:14px;background:#ececec;"></div>
<svg style="position:absolute;left:1822px;top:212.79999999999998px" width="12" height="12"><circle cx="6" cy="6" r="5" fill="#fff" stroke="#777"/></svg>
<div style="position:absolute;left:1841.40px;top:214.10px;white-space:pre;font-size:12.5px;color:#000;letter-spacing:-1.500px;">XYZ</div>
<div style="position:absolute;left:1822px;top:227px;width:66px;height:14px;background:#ececec;"></div>
<svg style="position:absolute;left:1822px;top:226.7px" width="12" height="12"><circle cx="6" cy="6" r="5" fill="#fff" stroke="#777"/></svg>
<div style="position:absolute;left:1841.40px;top:228.00px;white-space:pre;font-size:12.5px;color:#000;letter-spacing:0.750px;">xyz</div>
<div style="position:absolute;left:1822px;top:243.7px;width:66px;height:14px;background:#ececec;"></div>
<svg style="position:absolute;left:1822px;top:243.39999999999998px" width="12" height="12"><circle cx="6" cy="6" r="5" fill="#fff" stroke="#777"/><circle cx='6' cy='6' r='2' fill='#000'/></svg>
<div style="position:absolute;left:1841.40px;top:244.70px;white-space:pre;font-size:12.5px;color:#000;letter-spacing:0.000px;">xyY</div>
<div style="position:absolute;left:1812px;top:262px;width:84px;height:96px;background:#8a8a8a;"></div>
<div style="position:absolute;left:1813px;top:264px;width:82px;height:30px;background:#e8e8e8;border-top:1px solid #fff;border-left:1px solid #fff;border-bottom:1px solid #b4b4b4;border-right:1px solid #b4b4b4;"></div>
<div style="position:absolute;left:1813px;top:294px;width:82px;height:30px;background:#e8e8e8;border-top:1px solid #fff;border-left:1px solid #fff;border-bottom:1px solid #b4b4b4;border-right:1px solid #b4b4b4;"></div>
<div style="position:absolute;left:1813px;top:324px;width:82px;height:29px;background:#e8e8e8;border-top:1px solid #fff;border-left:1px solid #fff;border-bottom:1px solid #b4b4b4;border-right:1px solid #b4b4b4;"></div>
<svg style="position:absolute;left:1817px;top:266px" width="34" height="28" shape-rendering="crispEdges">
<path d="M1 1H9V22L12 26H1Z" fill="#c4c4c4"/><path d="M1.5 1V26M8.5 1V20" stroke="#222" stroke-dasharray="1.5,1.5"/>
<path d="M3 4H7V7H4V10H7V13H4V16H7V19H3Z" fill="#eee"/>
<path d="M23 4H32V27H26L23 22Z" fill="#c4c4c4"/><path d="M32.5 4V27M23.5 4V20" stroke="#222" stroke-dasharray="1.5,1.5"/>
<path d="M26 8H30V11H27V14H30V17H27V20H30V23H26Z" fill="#eee"/>
<path d="M7 0H21L24 8L22 14L30 20L31 24L25 27H16L13 20L11 12Z" fill="#e8141c"/>
<path d="M12 5L21 3M12 12L22 9M14 19L23 15M19 24L28 19M21 1L15 27" stroke="#300" stroke-width="1.2"/>
</svg>
<div style="position:absolute;left:1863.20px;top:272.90px;white-space:pre;font-size:13px;letter-spacing:-0.700px;">Go</div>
<svg style="position:absolute;left:1818px;top:295px" width="32" height="28">
<defs><linearGradient id="bin" x1="0" y1="0" x2="1" y2="0.3"><stop offset="0" stop-color="#e8f8ff"/><stop offset="0.5" stop-color="#a8d8f4"/><stop offset="1" stop-color="#4a94d0"/></linearGradient></defs>
<path d="M1 4Q14 -1 29 1L26 24Q16 29 6 25Z" fill="url(#bin)" stroke="#6aa8d8" stroke-width="0.8"/>
<path d="M3 5Q15 1 28 2L27 6Q15 4 4 8Z" fill="#5aa8e8" opacity="0.7"/>
<ellipse cx="16" cy="22" rx="10" ry="3.5" fill="#c8ecff" opacity="0.8"/>
<path d="M14 15A5 5 0 0 1 22 9L23 7L25 13L19 13L21 11A3 3 0 0 0 16 15Z" fill="#18a028"/>
<path d="M24 16A5 5 0 0 1 16 21L14 23L13 17L19 17L17 19A3 3 0 0 0 22 16Z" fill="#18a028"/>
</svg>
<div style="position:absolute;left:1850.20px;top:302.30px;white-space:pre;font-size:13px;letter-spacing:0.860px;">Delete</div>
<svg style="position:absolute;left:0;top:0" width="1920" height="400" shape-rendering="crispEdges"><rect x="1818" y="339" width="3" height="2" fill="#ffff00"/><rect x="1818" y="340" width="3" height="11" fill="#000080"/><rect x="1821" y="337" width="3" height="2" fill="#ffff00"/><rect x="1821" y="338" width="3" height="13" fill="#ff00ff"/><rect x="1824" y="331" width="4" height="2" fill="#ffff00"/><rect x="1824" y="332" width="4" height="19" fill="#0000ff"/><rect x="1828" y="335" width="3" height="2" fill="#ffff00"/><rect x="1828" y="336" width="3" height="15" fill="#00ffff"/><rect x="1831" y="337" width="4" height="2" fill="#ffff00"/><rect x="1831" y="338" width="4" height="13" fill="#00ff00"/><rect x="1835" y="329" width="4" height="2" fill="#ffff00"/><rect x="1835" y="330" width="4" height="21" fill="#ffff00"/><rect x="1839" y="331" width="3" height="2" fill="#ffff00"/><rect x="1839" y="332" width="3" height="19" fill="#800000"/><rect x="1842" y="336" width="8" height="2" fill="#ffff00"/><rect x="1842" y="337" width="8" height="14" fill="#ff0000"/></svg>
<div style="position:absolute;left:1857.40px;top:332.40px;white-space:pre;font-size:13px;letter-spacing:0.000px;">Refs</div>
<div style="position:absolute;left:1814px;top:356px;width:82px;height:22px;background:#8a8a8a;"></div>
<div style="position:absolute;left:1817px;top:358px;width:56px;height:19px;background:#ececec;"></div>
<div style="position:absolute;left:1820px;top:361px;width:12px;height:12px;background:#fff;border-top:1px solid #6d6d6d;border-left:1px solid #6d6d6d;border-right:1px solid #fff;border-bottom:1px solid #fff;"></div>
<div style="position:absolute;left:1836.00px;top:359.00px;white-space:pre;font-size:13px;letter-spacing:0.667px;">Edit</div>
<div style="position:absolute;left:5px;top:387px;width:379px;height:629px;background:#ececec;border:2px solid #7c7c7c;border-top-left-radius:5px;border-top-right-radius:5px;"></div>
<div style="position:absolute;left:7px;top:389px;width:375px;height:16px;background:linear-gradient(90deg,#e3e9f3,#edf1f8);border-top-left-radius:4px;border-top-right-radius:4px;border-bottom:1px solid #a9a9a9;"></div>
<div style="position:absolute;left:12.70px;top:389.70px;white-space:pre;font-weight:bold;color:#3b3b4a;font-size:11.8px;-webkit-text-stroke:0.3px #3b3b4a;letter-spacing:0.869px;">Selected color</div>
<div style="position:absolute;left:384px;top:386px;width:1px;height:631px;background:#fff;"></div>
<div style="position:absolute;left:385px;top:386px;width:2px;height:631px;background:#6e6e6e;"></div>
<div style="position:absolute;left:387px;top:386px;width:2px;height:631px;background:#c0c0c0;"></div>
<div style="position:absolute;left:389px;top:386px;width:2px;height:631px;background:#fff;"></div>
<div style="position:absolute;left:15px;top:409px;width:113px;height:15px;background:#f0f0f0;"></div>
<div style="position:absolute;left:17.30px;top:409.70px;white-space:pre;font-size:12.5px;letter-spacing:0.267px;">RGB Levels</div>
<div style="position:absolute;left:230px;top:406px;width:128px;height:16px;background:#f0f0f0;"></div>
<div style="position:absolute;left:241.70px;top:407.30px;white-space:pre;font-size:12.5px;letter-spacing:0.786px;">Current Measure</div>
<div style="position:absolute;left:14px;top:433px;width:200px;height:86px;background:#f0f0f0;"></div>
<svg style="position:absolute;left:14px;top:433px" width="200" height="86" shape-rendering="crispEdges"><path d="M0 44.5H200" stroke="#888" stroke-dasharray="3,3"/><path d="M0 81 L4 79 L9 77 L16 76 L35 76 L42 77 L47 79 L51 81 Z" fill="#000" stroke="#fff" stroke-width="0.6"/><path d="M4 81 L8 79 L12 78 L18 77 L34 77 L40 78 L44 79 L47 81 Z" fill="#a80000"/><path d="M51 81 L55 79 L60 77 L67 76 L86 76 L93 77 L98 79 L102 81 Z" fill="#000" stroke="#fff" stroke-width="0.6"/><path d="M55 81 L59 79 L63 78 L69 77 L85 77 L91 78 L95 79 L98 81 Z" fill="#00a000"/><path d="M102 81 L106 79 L111 77 L118 76 L137 76 L144 77 L149 79 L153 81 Z" fill="#000" stroke="#fff" stroke-width="0.6"/><path d="M106 81 L110 79 L114 78 L120 77 L136 77 L142 78 L146 79 L149 81 Z" fill="#0000a8"/><path d="M153 81 L157 79 L162 77 L169 76 L188 76 L195 77 L200 79 L204 81 Z" fill="#000" stroke="#fff" stroke-width="0.6"/><path d="M157 81 L161 79 L165 78 L171 77 L187 77 L193 78 L197 79 L200 81 Z" fill="#c08810"/><rect x="0" y="81" width="200" height="5" fill="#000"/></svg>
<div style="position:absolute;left:26.60px;top:495.80px;white-space:pre;font-family:"Liberation Serif",serif;font-size:11px;font-weight:bold;color:#1a1a2a;letter-spacing:-0.800px;">0.0%</div>
<div style="position:absolute;left:77.40px;top:495.80px;white-space:pre;font-family:"Liberation Serif",serif;font-size:11px;font-weight:bold;color:#1a1a2a;letter-spacing:-0.800px;">0.0%</div>
<div style="position:absolute;left:128.30px;top:495.80px;white-space:pre;font-family:"Liberation Serif",serif;font-size:11px;font-weight:bold;color:#1a1a2a;letter-spacing:-0.800px;">0.0%</div>
<div style="position:absolute;left:175.20px;top:495.80px;white-space:pre;font-family:"Liberation Serif",serif;font-size:11px;font-weight:bold;color:#1a1a2a;letter-spacing:-0.360px;">dE 0.0</div>
<div style="position:absolute;left:16px;top:533px;width:192px;height:74px;background:#f0f0f0;"></div>
<div style="position:absolute;left:35.60px;top:533.00px;white-space:pre;font-size:13.5px;font-weight:bold;letter-spacing:0.133px;">Measure</div>
<div style="position:absolute;left:127.70px;top:533.00px;white-space:pre;font-size:13.5px;font-weight:bold;letter-spacing:-0.062px;">Reference</div>
<div style="position:absolute;left:18.30px;top:623.00px;white-space:pre;font-size:12.5px;letter-spacing:0.800px;">Target</div>
<div style="position:absolute;left:50px;top:638px;width:116px;height:89px;background:conic-gradient(from 90deg at 50% 50%,#ff0000 0deg,#ff0090 38deg,#9000c0 90deg,#1000ff 142deg,#0070c0 180deg,#00e890 218deg,#40ff00 270deg,#ffc000 322deg,#ff0000 360deg);border:1px solid #000;"></div>
<svg style="position:absolute;left:50px;top:638px" width="116" height="89">
<rect x="17.5" y="13.5" width="82" height="63" rx="8" fill="#000" stroke="#fff"/>
<path d="M58.5 14V76" stroke="#fff" stroke-dasharray="3,2"/>
<path d="M15 44.5H103" stroke="#fff" stroke-dasharray="3,2"/>
<path d="M15 44.5H17M101 44.5H103" stroke="#000"/>
<ellipse cx="58.5" cy="44.5" rx="21" ry="16" fill="none" stroke="#fff" stroke-dasharray="3,3"/>
</svg>
<div style="position:absolute;left:220px;top:430px;width:153px;height:578px;background:#f0f0f0;border-top:2px solid #6d6d6d;border-left:2px solid #6d6d6d;"></div>
<div style="position:absolute;left:222px;top:432px;width:53px;height:23px;background:#f0f0f0;border-right:2px solid #6d6d6d;border-bottom:2px solid #6d6d6d;"></div>
<div style="position:absolute;left:275px;top:432px;width:80px;height:23px;background:#fff;border-bottom:1px solid #c4c4c4;"></div>
<div style="position:absolute;left:222px;top:436px;width:53px;text-align:center;font-weight:bold;font-size:12px;white-space:pre;">Y cd/m<sup style='font-size:8px'>2</sup></div>
<div style="position:absolute;left:222px;top:455px;width:53px;height:23px;background:#f0f0f0;border-right:2px solid #6d6d6d;border-bottom:2px solid #6d6d6d;"></div>
<div style="position:absolute;left:275px;top:455px;width:80px;height:23px;background:#fff;border-bottom:1px solid #c4c4c4;"></div>
<div style="position:absolute;left:222px;top:459px;width:53px;text-align:center;font-weight:bold;font-size:12px;white-space:pre;">Y ftL</div>
<div style="position:absolute;left:222px;top:478px;width:53px;height:23px;background:#f0f0f0;border-right:2px solid #6d6d6d;border-bottom:2px solid #6d6d6d;"></div>
<div style="position:absolute;left:275px;top:478px;width:80px;height:23px;background:#fff;border-bottom:1px solid #c4c4c4;"></div>
<div style="position:absolute;left:222px;top:482px;width:53px;text-align:center;font-weight:bold;font-size:12px;white-space:pre;">T°</div>
<div style="position:absolute;left:222px;top:501px;width:53px;height:23px;background:#f0f0f0;border-right:2px solid #6d6d6d;border-bottom:2px solid #6d6d6d;"></div>
<div style="position:absolute;left:275px;top:501px;width:80px;height:23px;background:#dfdfdf;border-bottom:1px solid #c4c4c4;"></div>
<div style="position:absolute;left:222px;top:505px;width:53px;text-align:center;font-weight:bold;font-size:12px;white-space:pre;">X</div>
<div style="position:absolute;left:222px;top:524px;width:53px;height:23px;background:#f0f0f0;border-right:2px solid #6d6d6d;border-bottom:2px solid #6d6d6d;"></div>
<div style="position:absolute;left:275px;top:524px;width:80px;height:23px;background:#dfdfdf;border-bottom:1px solid #c4c4c4;"></div>
<div style="position:absolute;left:222px;top:528px;width:53px;text-align:center;font-weight:bold;font-size:12px;white-space:pre;">Y</div>
<div style="position:absolute;left:222px;top:547px;width:53px;height:23px;background:#f0f0f0;border-right:2px solid #6d6d6d;border-bottom:2px solid #6d6d6d;"></div>
<div style="position:absolute;left:275px;top:547px;width:80px;height:23px;background:#dfdfdf;border-bottom:1px solid #c4c4c4;"></div>
<div style="position:absolute;left:222px;top:551px;width:53px;text-align:center;font-weight:bold;font-size:12px;white-space:pre;">Z</div>
<div style="position:absolute;left:222px;top:570px;width:53px;height:23px;background:#f0f0f0;border-right:2px solid #6d6d6d;border-bottom:2px solid #6d6d6d;"></div>
<div style="position:absolute;left:275px;top:570px;width:80px;height:23px;background:#fff;border-bottom:1px solid #c4c4c4;"></div>
<div style="position:absolute;left:222px;top:574px;width:53px;text-align:center;font-weight:bold;font-size:12px;white-space:pre;">R</div>
<div style="position:absolute;left:222px;top:593px;width:53px;height:23px;background:#f0f0f0;border-right:2px solid #6d6d6d;border-bottom:2px solid #6d6d6d;"></div>
<div style="position:absolute;left:275px;top:593px;width:80px;height:23px;background:#fff;border-bottom:1px solid #c4c4c4;"></div>
<div style="position:absolute;left:222px;top:597px;width:53px;text-align:center;font-weight:bold;font-size:12px;white-space:pre;">G</div>
<div style="position:absolute;left:222px;top:616px;width:53px;height:23px;background:#f0f0f0;border-right:2px solid #6d6d6d;border-bottom:2px solid #6d6d6d;"></div>
<div style="position:absolute;left:275px;top:616px;width:80px;height:23px;background:#fff;border-bottom:1px solid #c4c4c4;"></div>
<div style="position:absolute;left:222px;top:620px;width:53px;text-align:center;font-weight:bold;font-size:12px;white-space:pre;">B</div>
<div style="position:absolute;left:222px;top:639px;width:53px;height:23px;background:#f0f0f0;border-right:2px solid #6d6d6d;border-bottom:2px solid #6d6d6d;"></div>
<div style="position:absolute;left:275px;top:639px;width:80px;height:23px;background:#dfdfdf;border-bottom:1px solid #c4c4c4;"></div>
<div style="position:absolute;left:222px;top:643px;width:53px;text-align:center;font-weight:bold;font-size:12px;white-space:pre;">x</div>
<div style="position:absolute;left:222px;top:662px;width:53px;height:23px;background:#f0f0f0;border-right:2px solid #6d6d6d;border-bottom:2px solid #6d6d6d;"></div>
<div style="position:absolute;left:275px;top:662px;width:80px;height:23px;background:#dfdfdf;border-bottom:1px solid #c4c4c4;"></div>
<div style="position:absolute;left:222px;top:666px;width:53px;text-align:center;font-weight:bold;font-size:12px;white-space:pre;">y</div>
<div style="position:absolute;left:222px;top:685px;width:53px;height:23px;background:#f0f0f0;border-right:2px solid #6d6d6d;border-bottom:2px solid #6d6d6d;"></div>
<div style="position:absolute;left:275px;top:685px;width:80px;height:23px;background:#dfdfdf;border-bottom:1px solid #c4c4c4;"></div>
<div style="position:absolute;left:222px;top:689px;width:53px;text-align:center;font-weight:bold;font-size:12px;white-space:pre;">Y</div>
<div style="position:absolute;left:222px;top:708px;width:53px;height:23px;background:#f0f0f0;border-right:2px solid #6d6d6d;border-bottom:2px solid #6d6d6d;"></div>
<div style="position:absolute;left:275px;top:708px;width:80px;height:23px;background:#fff;border-bottom:1px solid #c4c4c4;"></div>
<div style="position:absolute;left:222px;top:712px;width:53px;text-align:center;font-weight:bold;font-size:12px;white-space:pre;">x</div>
<div style="position:absolute;left:222px;top:731px;width:53px;height:23px;background:#f0f0f0;border-right:2px solid #6d6d6d;border-bottom:2px solid #6d6d6d;"></div>
<div style="position:absolute;left:275px;top:731px;width:80px;height:23px;background:#fff;border-bottom:1px solid #c4c4c4;"></div>
<div style="position:absolute;left:222px;top:735px;width:53px;text-align:center;font-weight:bold;font-size:12px;white-space:pre;">y</div>
<div style="position:absolute;left:222px;top:754px;width:53px;height:23px;background:#f0f0f0;border-right:2px solid #6d6d6d;border-bottom:2px solid #6d6d6d;"></div>
<div style="position:absolute;left:275px;top:754px;width:80px;height:23px;background:#fff;border-bottom:1px solid #c4c4c4;"></div>
<div style="position:absolute;left:222px;top:758px;width:53px;text-align:center;font-weight:bold;font-size:12px;white-space:pre;">z</div>
<div style="position:absolute;left:222px;top:777px;width:53px;height:23px;background:#f0f0f0;border-right:2px solid #6d6d6d;border-bottom:2px solid #6d6d6d;"></div>
<div style="position:absolute;left:275px;top:777px;width:80px;height:23px;background:#dfdfdf;border-bottom:1px solid #c4c4c4;"></div>
<div style="position:absolute;left:222px;top:781px;width:53px;text-align:center;font-weight:bold;font-size:12px;white-space:pre;">L</div>
<div style="position:absolute;left:222px;top:800px;width:53px;height:22px;background:#f0f0f0;border-right:2px solid #6d6d6d;border-bottom:2px solid #6d6d6d;"></div>
<div style="position:absolute;left:275px;top:800px;width:80px;height:22px;background:#dfdfdf;border-bottom:1px solid #c4c4c4;"></div>
<div style="position:absolute;left:222px;top:804px;width:53px;text-align:center;font-weight:bold;font-size:12px;white-space:pre;">a</div>
<div style="position:absolute;left:222px;top:822px;width:53px;height:23px;background:#f0f0f0;border-right:2px solid #6d6d6d;border-bottom:2px solid #6d6d6d;"></div>
<div style="position:absolute;left:275px;top:822px;width:80px;height:23px;background:#dfdfdf;border-bottom:1px solid #c4c4c4;"></div>
<div style="position:absolute;left:222px;top:826px;width:53px;text-align:center;font-weight:bold;font-size:12px;white-space:pre;">b</div>
<div style="position:absolute;left:222px;top:845px;width:53px;height:23px;background:#f0f0f0;border-right:2px solid #6d6d6d;border-bottom:2px solid #6d6d6d;"></div>
<div style="position:absolute;left:275px;top:845px;width:80px;height:23px;background:#fff;border-bottom:1px solid #c4c4c4;"></div>
<div style="position:absolute;left:222px;top:849px;width:53px;text-align:center;font-weight:bold;font-size:12px;white-space:pre;">L</div>
<div style="position:absolute;left:222px;top:868px;width:53px;height:23px;background:#f0f0f0;border-right:2px solid #6d6d6d;border-bottom:2px solid #6d6d6d;"></div>
<div style="position:absolute;left:275px;top:868px;width:80px;height:23px;background:#fff;border-bottom:1px solid #c4c4c4;"></div>
<div style="position:absolute;left:222px;top:872px;width:53px;text-align:center;font-weight:bold;font-size:12px;white-space:pre;">C</div>
<div style="position:absolute;left:222px;top:891px;width:53px;height:23px;background:#f0f0f0;border-right:2px solid #6d6d6d;border-bottom:2px solid #6d6d6d;"></div>
<div style="position:absolute;left:275px;top:891px;width:80px;height:23px;background:#fff;border-bottom:1px solid #c4c4c4;"></div>
<div style="position:absolute;left:222px;top:895px;width:53px;text-align:center;font-weight:bold;font-size:12px;white-space:pre;">H</div>
<div style="position:absolute;left:222px;top:914px;width:53px;height:23px;background:#f0f0f0;border-right:2px solid #6d6d6d;border-bottom:2px solid #6d6d6d;"></div>
<div style="position:absolute;left:275px;top:914px;width:80px;height:23px;background:#dfdfdf;border-bottom:1px solid #c4c4c4;"></div>
<div style="position:absolute;left:222px;top:918px;width:53px;text-align:center;font-weight:bold;font-size:12px;white-space:pre;">L</div>
<div style="position:absolute;left:222px;top:937px;width:53px;height:23px;background:#f0f0f0;border-right:2px solid #6d6d6d;border-bottom:2px solid #6d6d6d;"></div>
<div style="position:absolute;left:275px;top:937px;width:80px;height:23px;background:#dfdfdf;border-bottom:1px solid #c4c4c4;"></div>
<div style="position:absolute;left:222px;top:941px;width:53px;text-align:center;font-weight:bold;font-size:12px;white-space:pre;">M</div>
<div style="position:absolute;left:222px;top:960px;width:53px;height:23px;background:#f0f0f0;border-right:2px solid #6d6d6d;border-bottom:2px solid #6d6d6d;"></div>
<div style="position:absolute;left:275px;top:960px;width:80px;height:23px;background:#dfdfdf;border-bottom:1px solid #c4c4c4;"></div>
<div style="position:absolute;left:222px;top:964px;width:53px;text-align:center;font-weight:bold;font-size:12px;white-space:pre;">S</div>
<div style="position:absolute;left:222px;top:983px;width:133px;height:24px;background:#a0a0a0;"></div>
<div style="position:absolute;left:355px;top:432px;width:17px;height:575px;background:#f0f0f0;"></div>
<svg style="position:absolute;left:358px;top:437px" width="11" height="8"><path d="M1 6L5.5 1.5L10 6" stroke="#c0c0c0" stroke-width="1.5" fill="none"/></svg>
<svg style="position:absolute;left:358px;top:995px" width="11" height="8"><path d="M1 1.5L5.5 6L10 1.5" stroke="#c0c0c0" stroke-width="1.5" fill="none"/></svg>
<div style="position:absolute;left:391px;top:387px;width:1505px;height:629px;background:#ececec;border:2px solid #7c7c7c;border-top-left-radius:5px;border-top-right-radius:5px;"></div>
<div style="position:absolute;left:393px;top:389px;width:1501px;height:16px;background:linear-gradient(90deg,#e3e9f3,#edf1f8);border-top-left-radius:4px;border-top-right-radius:4px;border-bottom:1px solid #a9a9a9;"></div>
<div style="position:absolute;left:398.30px;top:390.00px;white-space:pre;font-weight:bold;color:#3b3b4a;font-size:11.8px;-webkit-text-stroke:0.3px #3b3b4a;letter-spacing:1.200px;">Information</div>
<div style="position:absolute;left:396px;top:409px;width:302px;height:22px;background:#fff;border-top:2px solid #6f6f6f;border-left:2px solid #6f6f6f;border-bottom:1px solid #e8e8e8;border-right:1px solid #e8e8e8;"></div>
<div style="position:absolute;left:399.80px;top:413.10px;white-space:pre;font-size:13px;letter-spacing:0.338px;">Luminance - Gamma</div>
<div style="position:absolute;left:679px;top:411px;width:17px;height:18px;background:#f0f0f0;border-right:1px solid #555;border-bottom:1px solid #555;border-top:1px solid #fff;border-left:1px solid #fff;"></div>
<svg style="position:absolute;left:684px;top:418px" width="8" height="5"><path d="M0 0H8L4 4Z" fill="#000"/></svg>
<div style="position:absolute;left:397px;top:439px;width:1497px;height:569px;background:#f4f4f4;border-top:2px solid #8a8a8a;border-left:2px solid #8a8a8a;"></div>
<div style="position:absolute;left:402px;top:443px;width:74px;height:562px;background:linear-gradient(90deg,rgb(30,30,30),rgb(47,47,47));"></div>
<div style="position:absolute;left:476px;top:443px;width:74px;height:562px;background:linear-gradient(90deg,rgb(52,52,52),rgb(70,70,70));"></div>
<div style="position:absolute;left:550px;top:443px;width:74px;height:562px;background:linear-gradient(90deg,rgb(75,75,75),rgb(92,92,92));"></div>
<div style="position:absolute;left:624px;top:443px;width:74px;height:562px;background:linear-gradient(90deg,rgb(97,97,97),rgb(114,114,114));"></div>
<div style="position:absolute;left:698px;top:443px;width:74px;height:562px;background:linear-gradient(90deg,rgb(119,119,119),rgb(137,137,137));"></div>
<div style="position:absolute;left:772px;top:443px;width:74px;height:562px;background:linear-gradient(90deg,rgb(142,142,142),rgb(159,159,159));"></div>
<div style="position:absolute;left:846px;top:443px;width:74px;height:562px;background:linear-gradient(90deg,rgb(164,164,164),rgb(181,181,181));"></div>
<div style="position:absolute;left:920px;top:443px;width:74px;height:562px;background:linear-gradient(90deg,rgb(186,186,186),rgb(203,203,203));"></div>
<div style="position:absolute;left:994px;top:443px;width:74px;height:562px;background:linear-gradient(90deg,rgb(208,208,208),rgb(226,226,226));"></div>
<div style="position:absolute;left:1068px;top:443px;width:75px;height:562px;background:linear-gradient(90deg,rgb(231,231,231),rgb(248,248,248));"></div>
<svg style="position:absolute;left:402px;top:443px" width="741" height="562" shape-rendering="crispEdges"><path d="M74.5 0V562" stroke="#064545" stroke-width="1"/><path d="M148.5 0V562" stroke="#064545" stroke-width="1"/><path d="M222.5 0V562" stroke="#064545" stroke-width="1"/><path d="M296.5 0V562" stroke="#064545" stroke-width="1"/><path d="M370.5 0V562" stroke="#064545" stroke-width="1"/><path d="M444.5 0V562" stroke="#064545" stroke-width="1"/><path d="M518.5 0V562" stroke="#064545" stroke-width="1"/><path d="M592.5 0V562" stroke="#064545" stroke-width="1"/><path d="M666.5 0V562" stroke="#064545" stroke-width="1"/><path d="M0 70.5H741" stroke="#064545" stroke-width="1"/><path d="M0 140.5H741" stroke="#064545" stroke-width="1"/><path d="M0 210.5H741" stroke="#064545" stroke-width="1"/><path d="M0 281.5H741" stroke="#064545" stroke-width="1"/><path d="M0 351.5H741" stroke="#064545" stroke-width="1"/><path d="M0 421.5H741" stroke="#064545" stroke-width="1"/><path d="M0 491.5H741" stroke="#064545" stroke-width="1"/></svg>
<div style="position:absolute;left:477px;top:989px;font-family:&quot;Liberation Serif&quot;,serif;font-size:14.2px;color:rgb(221,221,221);white-space:pre;">10% White</div>
<div style="position:absolute;left:551px;top:989px;font-family:&quot;Liberation Serif&quot;,serif;font-size:14.2px;color:rgb(204,204,204);white-space:pre;">20% White</div>
<div style="position:absolute;left:625px;top:989px;font-family:&quot;Liberation Serif&quot;,serif;font-size:14.2px;color:rgb(175,175,175);white-space:pre;">30% White</div>
<div style="position:absolute;left:699px;top:989px;font-family:&quot;Liberation Serif&quot;,serif;font-size:14.2px;color:rgb(150,150,150);white-space:pre;">40% White</div>
<div style="position:absolute;left:773px;top:989px;font-family:&quot;Liberation Serif&quot;,serif;font-size:14.2px;color:rgb(135,135,135);white-space:pre;">50% White</div>
<div style="position:absolute;left:847px;top:989px;font-family:&quot;Liberation Serif&quot;,serif;font-size:14.2px;color:rgb(118,118,118);white-space:pre;">60% White</div>
<div style="position:absolute;left:921px;top:989px;font-family:&quot;Liberation Serif&quot;,serif;font-size:14.2px;color:rgb(100,100,100);white-space:pre;">70% White</div>
<div style="position:absolute;left:995px;top:989px;font-family:&quot;Liberation Serif&quot;,serif;font-size:14.2px;color:rgb(68,68,68);white-space:pre;">80% White</div>
<div style="position:absolute;left:1069px;top:989px;font-family:&quot;Liberation Serif&quot;,serif;font-size:14.2px;color:rgb(34,34,34);white-space:pre;">90% White</div>
<div style="position:absolute;left:1143px;top:441px;width:3px;height:566px;background:#fff;"></div>
<div style="position:absolute;left:1146px;top:439px;width:2px;height:568px;background:#6e6e6e;"></div>
<div style="position:absolute;left:1148px;top:441px;width:2px;height:566px;background:#a0a0a0;"></div>
<div style="position:absolute;left:1148px;top:439px;width:746px;height:2px;background:#6e6e6e;"></div>
<div style="position:absolute;left:1150px;top:441px;width:744px;height:2px;background:#a0a0a0;"></div>
<div style="position:absolute;left:1150px;top:443px;width:74px;height:562px;background:linear-gradient(90deg,rgb(30,30,30),rgb(47,47,47));"></div>
<div style="position:absolute;left:1224px;top:443px;width:74px;height:562px;background:linear-gradient(90deg,rgb(52,52,52),rgb(70,70,70));"></div>
<div style="position:absolute;left:1298px;top:443px;width:74px;height:562px;background:linear-gradient(90deg,rgb(75,75,75),rgb(92,92,92));"></div>
<div style="position:absolute;left:1372px;top:443px;width:74px;height:562px;background:linear-gradient(90deg,rgb(97,97,97),rgb(114,114,114));"></div>
<div style="position:absolute;left:1446px;top:443px;width:74px;height:562px;background:linear-gradient(90deg,rgb(119,119,119),rgb(137,137,137));"></div>
<div style="position:absolute;left:1520px;top:443px;width:74px;height:562px;background:linear-gradient(90deg,rgb(142,142,142),rgb(159,159,159));"></div>
<div style="position:absolute;left:1594px;top:443px;width:74px;height:562px;background:linear-gradient(90deg,rgb(164,164,164),rgb(181,181,181));"></div>
<div style="position:absolute;left:1668px;top:443px;width:74px;height:562px;background:linear-gradient(90deg,rgb(186,186,186),rgb(203,203,203));"></div>
<div style="position:absolute;left:1742px;top:443px;width:74px;height:562px;background:linear-gradient(90deg,rgb(208,208,208),rgb(226,226,226));"></div>
<div style="position:absolute;left:1816px;top:443px;width:74px;height:562px;background:linear-gradient(90deg,rgb(231,231,231),rgb(248,248,248));"></div>
<svg style="position:absolute;left:1150px;top:443px" width="740" height="562" shape-rendering="crispEdges"><path d="M74.5 0V562" stroke="#064545" stroke-width="1"/><path d="M148.5 0V562" stroke="#064545" stroke-width="1"/><path d="M222.5 0V562" stroke="#064545" stroke-width="1"/><path d="M296.5 0V562" stroke="#064545" stroke-width="1"/><path d="M370.5 0V562" stroke="#064545" stroke-width="1"/><path d="M444.5 0V562" stroke="#064545" stroke-width="1"/><path d="M518.5 0V562" stroke="#064545" stroke-width="1"/><path d="M592.5 0V562" stroke="#064545" stroke-width="1"/><path d="M666.5 0V562" stroke="#064545" stroke-width="1"/><path d="M0 28.5H740" stroke="#064545" stroke-width="1"/><path d="M0 56.5H740" stroke="#064545" stroke-width="1"/><path d="M0 84.5H740" stroke="#064545" stroke-width="1"/><path d="M0 112.5H740" stroke="#064545" stroke-width="1"/><path d="M0 140.5H740" stroke="#064545" stroke-width="1"/><path d="M0 168.5H740" stroke="#064545" stroke-width="1"/><path d="M0 196.5H740" stroke="#064545" stroke-width="1"/><path d="M0 224.5H740" stroke="#064545" stroke-width="1"/><path d="M0 252.5H740" stroke="#064545" stroke-width="1"/><path d="M0 281.5H740" stroke="#064545" stroke-width="1"/><path d="M0 309.5H740" stroke="#064545" stroke-width="1"/><path d="M0 337.5H740" stroke="#064545" stroke-width="1"/><path d="M0 365.5H740" stroke="#064545" stroke-width="1"/><path d="M0 393.5H740" stroke="#064545" stroke-width="1"/><path d="M0 421.5H740" stroke="#064545" stroke-width="1"/><path d="M0 449.5H740" stroke="#064545" stroke-width="1"/><path d="M0 477.5H740" stroke="#064545" stroke-width="1"/><path d="M0 505.5H740" stroke="#064545" stroke-width="1"/><path d="M0 533.5H740" stroke="#064545" stroke-width="1"/></svg>
<div style="position:absolute;left:1225px;top:989px;font-family:&quot;Liberation Serif&quot;,serif;font-size:14.2px;color:rgb(221,221,221);white-space:pre;">10% White</div>
<div style="position:absolute;left:1299px;top:989px;font-family:&quot;Liberation Serif&quot;,serif;font-size:14.2px;color:rgb(204,204,204);white-space:pre;">20% White</div>
<div style="position:absolute;left:1373px;top:989px;font-family:&quot;Liberation Serif&quot;,serif;font-size:14.2px;color:rgb(175,175,175);white-space:pre;">30% White</div>
<div style="position:absolute;left:1447px;top:989px;font-family:&quot;Liberation Serif&quot;,serif;font-size:14.2px;color:rgb(150,150,150);white-space:pre;">40% White</div>
<div style="position:absolute;left:1521px;top:989px;font-family:&quot;Liberation Serif&quot;,serif;font-size:14.2px;color:rgb(135,135,135);white-space:pre;">50% White</div>
<div style="position:absolute;left:1595px;top:989px;font-family:&quot;Liberation Serif&quot;,serif;font-size:14.2px;color:rgb(118,118,118);white-space:pre;">60% White</div>
<div style="position:absolute;left:1669px;top:989px;font-family:&quot;Liberation Serif&quot;,serif;font-size:14.2px;color:rgb(100,100,100);white-space:pre;">70% White</div>
<div style="position:absolute;left:1743px;top:989px;font-family:&quot;Liberation Serif&quot;,serif;font-size:14.2px;color:rgb(68,68,68);white-space:pre;">80% White</div>
<div style="position:absolute;left:1817px;top:989px;font-family:&quot;Liberation Serif&quot;,serif;font-size:14.2px;color:rgb(34,34,34);white-space:pre;">90% White</div>
<div style="position:absolute;left:403px;top:497.5px;font-family:&quot;Liberation Serif&quot;,serif;font-size:14px;color:#e6e6e6;white-space:pre;">175 cd m-2</div>
<div style="position:absolute;left:403px;top:567.5px;font-family:&quot;Liberation Serif&quot;,serif;font-size:14px;color:#e6e6e6;white-space:pre;">150 cd m-2</div>
<div style="position:absolute;left:403px;top:637.5px;font-family:&quot;Liberation Serif&quot;,serif;font-size:14px;color:#e6e6e6;white-space:pre;">125 cd m-2</div>
<div style="position:absolute;left:403px;top:708.5px;font-family:&quot;Liberation Serif&quot;,serif;font-size:14px;color:#e6e6e6;white-space:pre;">100 cd m-2</div>
<div style="position:absolute;left:403px;top:778.5px;font-family:&quot;Liberation Serif&quot;,serif;font-size:14px;color:#e6e6e6;white-space:pre;">75 cd m-2</div>
<div style="position:absolute;left:403px;top:848.5px;font-family:&quot;Liberation Serif&quot;,serif;font-size:14px;color:#e6e6e6;white-space:pre;">50 cd m-2</div>
<div style="position:absolute;left:403px;top:918.5px;font-family:&quot;Liberation Serif&quot;,serif;font-size:14px;color:#e6e6e6;white-space:pre;">25 cd m-2</div>
<div style="position:absolute;left:709.20px;top:443.70px;white-space:pre;font-size:14.5px;font-weight:bold;color:#dcdc20;letter-spacing:0.129px;">Luminance Response</div>
<div style="position:absolute;left:976.20px;top:948.50px;white-space:pre;font-size:15px;font-weight:bold;color:#9c9c9c;letter-spacing:0.568px;">hcfr.sourceforge.net</div>
<div style="position:absolute;left:1152px;top:455.5px;font-family:&quot;Liberation Serif&quot;,serif;font-size:14px;color:#e6e6e6;white-space:pre;">2.9</div>
<div style="position:absolute;left:1152px;top:483.5px;font-family:&quot;Liberation Serif&quot;,serif;font-size:14px;color:#e6e6e6;white-space:pre;">2.8</div>
<div style="position:absolute;left:1152px;top:511.5px;font-family:&quot;Liberation Serif&quot;,serif;font-size:14px;color:#e6e6e6;white-space:pre;">2.7</div>
<div style="position:absolute;left:1152px;top:539.5px;font-family:&quot;Liberation Serif&quot;,serif;font-size:14px;color:#e6e6e6;white-space:pre;">2.6</div>
<div style="position:absolute;left:1152px;top:567.5px;font-family:&quot;Liberation Serif&quot;,serif;font-size:14px;color:#e6e6e6;white-space:pre;">2.5</div>
<div style="position:absolute;left:1152px;top:595.5px;font-family:&quot;Liberation Serif&quot;,serif;font-size:14px;color:#e6e6e6;white-space:pre;">2.4</div>
<div style="position:absolute;left:1152px;top:623.5px;font-family:&quot;Liberation Serif&quot;,serif;font-size:14px;color:#e6e6e6;white-space:pre;">2.3</div>
<div style="position:absolute;left:1152px;top:651.5px;font-family:&quot;Liberation Serif&quot;,serif;font-size:14px;color:#e6e6e6;white-space:pre;">2.2</div>
<div style="position:absolute;left:1152px;top:679.5px;font-family:&quot;Liberation Serif&quot;,serif;font-size:14px;color:#e6e6e6;white-space:pre;">2.1</div>
<div style="position:absolute;left:1152px;top:708.5px;font-family:&quot;Liberation Serif&quot;,serif;font-size:14px;color:#e6e6e6;white-space:pre;">2</div>
<div style="position:absolute;left:1152px;top:736.5px;font-family:&quot;Liberation Serif&quot;,serif;font-size:14px;color:#e6e6e6;white-space:pre;">1.9</div>
<div style="position:absolute;left:1152px;top:764.5px;font-family:&quot;Liberation Serif&quot;,serif;font-size:14px;color:#e6e6e6;white-space:pre;">1.8</div>
<div style="position:absolute;left:1152px;top:792.5px;font-family:&quot;Liberation Serif&quot;,serif;font-size:14px;color:#e6e6e6;white-space:pre;">1.7</div>
<div style="position:absolute;left:1152px;top:820.5px;font-family:&quot;Liberation Serif&quot;,serif;font-size:14px;color:#e6e6e6;white-space:pre;">1.6</div>
<div style="position:absolute;left:1152px;top:848.5px;font-family:&quot;Liberation Serif&quot;,serif;font-size:14px;color:#e6e6e6;white-space:pre;">1.5</div>
<div style="position:absolute;left:1152px;top:876.5px;font-family:&quot;Liberation Serif&quot;,serif;font-size:14px;color:#e6e6e6;white-space:pre;">1.4</div>
<div style="position:absolute;left:1152px;top:904.5px;font-family:&quot;Liberation Serif&quot;,serif;font-size:14px;color:#e6e6e6;white-space:pre;">1.3</div>
<div style="position:absolute;left:1152px;top:932.5px;font-family:&quot;Liberation Serif&quot;,serif;font-size:14px;color:#e6e6e6;white-space:pre;">1.2</div>
<div style="position:absolute;left:1152px;top:960.5px;font-family:&quot;Liberation Serif&quot;,serif;font-size:14px;color:#e6e6e6;white-space:pre;">1.1</div>
<div style="position:absolute;left:1481.50px;top:443.70px;white-space:pre;font-size:14.5px;font-weight:bold;color:#dcdc20;letter-spacing:0.100px;">EOTF(Gamma)</div>
<div style="position:absolute;left:1724.20px;top:948.50px;white-space:pre;font-size:15px;font-weight:bold;color:#9c9c9c;letter-spacing:0.568px;">hcfr.sourceforge.net</div>
<svg style="position:absolute;left:0;top:0" width="1920" height="1080"><clipPath id="clipL"><rect x="402" y="443" width="741" height="562"/></clipPath><g clip-path="url(#clipL)"><path d="M404.0 1005.0 L435.2 1004.2 L472.4 1001.5 L509.6 996.4 L546.8 988.8 L584.0 978.6 L621.2 965.6 L658.4 949.7 L695.6 930.8 L732.8 908.8 L770.0 883.7 L807.2 855.4 L844.4 823.9 L881.6 789.0 L918.8 750.8 L956.0 709.1 L993.2 663.9 L1030.4 615.3 L1067.6 563.1 L1104.8 507.2 L1142.0 447.8" stroke="#ffff00" stroke-width="4" fill="none"/><path d="M403.6 1004.6 L434.8 1003.8 L472.0 1001.1 L509.2 996.0 L546.4 988.4 L583.6 978.2 L620.8 965.2 L658.0 949.3 L695.2 930.4 L732.4 908.4 L769.6 883.3 L806.8 855.0 L844.0 823.5 L881.2 788.6 L918.4 750.4 L955.6 708.7 L992.8 663.5 L1030.0 614.9 L1067.2 562.7 L1104.4 506.8 L1141.6 447.4" stroke="#fff" stroke-width="1.6" fill="none"/><rect x="400" y="1001" width="8" height="8" fill="#fff"/><rect x="431" y="1000" width="8" height="8" fill="#fff"/><rect x="468" y="997" width="8" height="8" fill="#fff"/><rect x="506" y="992" width="8" height="8" fill="#fff"/><rect x="543" y="985" width="8" height="8" fill="#fff"/><rect x="580" y="975" width="8" height="8" fill="#fff"/><rect x="617" y="962" width="8" height="8" fill="#fff"/><rect x="654" y="946" width="8" height="8" fill="#fff"/><rect x="692" y="927" width="8" height="8" fill="#fff"/><rect x="729" y="905" width="8" height="8" fill="#fff"/><rect x="766" y="880" width="8" height="8" fill="#fff"/><rect x="803" y="851" width="8" height="8" fill="#fff"/><rect x="840" y="820" width="8" height="8" fill="#fff"/><rect x="878" y="785" width="8" height="8" fill="#fff"/><rect x="915" y="747" width="8" height="8" fill="#fff"/><rect x="952" y="705" width="8" height="8" fill="#fff"/><rect x="989" y="660" width="8" height="8" fill="#fff"/><rect x="1026" y="611" width="8" height="8" fill="#fff"/><rect x="1064" y="559" width="8" height="8" fill="#fff"/><rect x="1101" y="503" width="8" height="8" fill="#fff"/></g><path d="M1183 667.5H1852" stroke="#0a2a2a" stroke-width="1" stroke-dasharray="4,4" shape-rendering="crispEdges"/><path d="M1187 667.5H1852" stroke="#f4f4f4" stroke-width="1" stroke-dasharray="4,4" shape-rendering="crispEdges"/><path d="M1183.0 665.0 L1220.2 668.0 L1257.3 665.0 L1294.5 669.0 L1331.7 669.0 L1368.8 669.0 L1406.0 668.0 L1443.2 667.5 L1480.4 675.0 L1517.5 668.0 L1554.7 660.0 L1591.9 666.0 L1629.0 671.0 L1666.2 667.0 L1703.4 662.0 L1740.6 669.0 L1777.7 671.0 L1814.9 662.0 L1852.1 656.0" stroke="#ffff00" stroke-width="2" fill="none"/><rect x="1179" y="661" width="8" height="8" fill="#ffff00"/><rect x="1216" y="664" width="8" height="8" fill="#ffff00"/><rect x="1253" y="661" width="8" height="8" fill="#ffff00"/><rect x="1291" y="665" width="8" height="8" fill="#ffff00"/><rect x="1328" y="665" width="8" height="8" fill="#ffff00"/><rect x="1365" y="665" width="8" height="8" fill="#ffff00"/><rect x="1402" y="664" width="8" height="8" fill="#ffff00"/><rect x="1439" y="664" width="8" height="8" fill="#ffff00"/><rect x="1476" y="671" width="8" height="8" fill="#ffff00"/><rect x="1514" y="664" width="8" height="8" fill="#ffff00"/><rect x="1551" y="656" width="8" height="8" fill="#ffff00"/><rect x="1588" y="662" width="8" height="8" fill="#ffff00"/><rect x="1625" y="667" width="8" height="8" fill="#ffff00"/><rect x="1662" y="663" width="8" height="8" fill="#ffff00"/><rect x="1699" y="658" width="8" height="8" fill="#ffff00"/><rect x="1737" y="665" width="8" height="8" fill="#ffff00"/><rect x="1774" y="667" width="8" height="8" fill="#ffff00"/><rect x="1811" y="658" width="8" height="8" fill="#ffff00"/><rect x="1848" y="652" width="8" height="8" fill="#ffff00"/><rect x="1179" y="663" width="8" height="8" fill="#e6e6e6" opacity="1"/><rect x="1216" y="663" width="8" height="8" fill="#e6e6e6" opacity="1"/><rect x="1253" y="663" width="8" height="8" fill="#e6e6e6" opacity="1"/><rect x="1291" y="663" width="8" height="8" fill="#e6e6e6" opacity="1"/><rect x="1328" y="663" width="8" height="8" fill="#e6e6e6" opacity="1"/><rect x="1365" y="663" width="8" height="8" fill="#e6e6e6" opacity="1"/><rect x="1402" y="663" width="8" height="8" fill="#e6e6e6" opacity="1"/><rect x="1439" y="663" width="8" height="8" fill="#e6e6e6" opacity="1"/><rect x="1476" y="663" width="8" height="8" fill="#e6e6e6" opacity="1"/><rect x="1514" y="663" width="8" height="8" fill="#e6e6e6" opacity="1"/><rect x="1551" y="663" width="8" height="8" fill="#e6e6e6" opacity="1"/><rect x="1588" y="663" width="8" height="8" fill="#e6e6e6" opacity="1"/><rect x="1625" y="663" width="8" height="8" fill="#e6e6e6" opacity="1"/><rect x="1662" y="663" width="8" height="8" fill="#e6e6e6" opacity="1"/><rect x="1699" y="663" width="8" height="8" fill="#e6e6e6" opacity="1"/><rect x="1737" y="663" width="8" height="8" fill="#e6e6e6" opacity="1"/><rect x="1774" y="663" width="8" height="8" fill="#e6e6e6" opacity="0.55"/><rect x="1811" y="663" width="8" height="8" fill="#e6e6e6" opacity="0.55"/><rect x="1848" y="663" width="8" height="8" fill="#e6e6e6" opacity="0.55"/></svg>
<div style="position:absolute;left:0px;top:1016px;width:1900px;height:1px;background:#fff;"></div>
<div style="position:absolute;left:0px;top:1017px;width:1898px;height:2px;background:#6e6e6e;"></div>
<div style="position:absolute;left:0px;top:1019px;width:1901px;height:3px;background:#c0c0c0;"></div>
<div style="position:absolute;left:0px;top:1022px;width:1901px;height:1px;background:#fff;"></div>
<div style="position:absolute;left:0px;top:1022px;width:1920px;height:17px;background:#f0f0f0;"></div>
<div style="position:absolute;left:20px;top:1023px;width:1823px;height:15px;background:#cdcdcd;"></div>
<svg style="position:absolute;left:6px;top:1026px" width="8" height="10"><path d="M6 1L2 5L6 9" stroke="#606060" stroke-width="1.5" fill="none"/></svg>
<svg style="position:absolute;left:1889px;top:1026px" width="8" height="10"><path d="M2 1L6 5L2 9" stroke="#606060" stroke-width="1.5" fill="none"/></svg>
<div style="position:absolute;left:1900px;top:92px;width:20px;height:930px;background:#f0f0f0;"></div>
<div style="position:absolute;left:1902px;top:109px;width:16px;height:869px;background:#cdcdcd;"></div>
<svg style="position:absolute;left:1905px;top:97px" width="11" height="8"><path d="M1 6L5.5 1.5L10 6" stroke="#606060" stroke-width="1.5" fill="none"/></svg>
<svg style="position:absolute;left:1905px;top:1010px" width="11" height="8"><path d="M1 1.5L5.5 6L10 1.5" stroke="#606060" stroke-width="1.5" fill="none"/></svg>
<div style="position:absolute;left:0px;top:1041px;width:1920px;height:2px;background:#000;"></div>
<div style="position:absolute;left:0px;top:1043px;width:1920px;height:19px;background:#f0f0f0;"></div>
<div style="position:absolute;left:1px;top:1043px;width:52px;height:19px;background:#f0f0f0;border:1px solid #000;"></div>
<div style="position:absolute;left:18px;top:1043px;width:1px;height:19px;background:#000;"></div>
<div style="position:absolute;left:35px;top:1043px;width:1px;height:19px;background:#000;"></div>
<svg style="position:absolute;left:4px;top:1046px" width="12" height="12"><path d="M2 2L10 10M10 2L2 10" stroke="#000" stroke-width="1.3"/></svg>
<svg style="position:absolute;left:22px;top:1047px" width="10" height="10"><path d="M7 1L3 5L7 9Z" fill="#000"/></svg>
<svg style="position:absolute;left:39px;top:1047px" width="10" height="10"><path d="M3 1L7 5L3 9Z" fill="#000"/></svg>
<svg style="position:absolute;left:0;top:1042px" width="340" height="20"><path d="M123 0.5L131 18.5H186L194 0.5" fill="#f0f0f0" stroke="#111" stroke-width="1"/><path d="M187 0.5L195 18.5H237L245 0.5" fill="#f0f0f0" stroke="#111" stroke-width="1"/><path d="M238 0.5L246 18.5H314L322 0.5" fill="#f0f0f0" stroke="#111" stroke-width="1"/><path d="M55 0.5L63 18.5H120L128 0.5" fill="#fff" stroke="#111" stroke-width="1"/></svg>
<div style="position:absolute;left:66.70px;top:1047.00px;white-space:pre;font-size:10px;font-weight:bold;letter-spacing:0.471px;">Measures</div>
<div style="position:absolute;left:134.00px;top:1045.00px;white-space:pre;font-size:9.8px;letter-spacing:-0.400px;">Luminance</div>
<div style="position:absolute;left:200.00px;top:1045.00px;white-space:pre;font-size:9.8px;letter-spacing:-0.650px;">Gamma</div>
<div style="position:absolute;left:255.60px;top:1045.00px;white-space:pre;font-size:9.8px;letter-spacing:-0.333px;">RGB Levels</div>
<svg style="position:absolute;left:1751px;top:1044px" width="14" height="14"><path d="M1 1H13V9L10 13H4L1 9Z" fill="#6a6a10" stroke="#222"/><rect x="3" y="3" width="7" height="5" fill="#e02020"/><circle cx="10" cy="11" r="2.2" fill="#ffe000"/></svg>
<div style="position:absolute;left:1846px;top:1044px;width:13px;height:13px;background:#fff;border-top:1px solid #6d6d6d;border-left:1px solid #6d6d6d;"></div>
<div style="position:absolute;left:1864.80px;top:1044.70px;white-space:pre;font-size:11.5px;letter-spacing:-0.500px;">Reference</div>
<div style="position:absolute;left:0px;top:1061px;width:1920px;height:19px;background:#eef2fa;"></div>
<div style="position:absolute;left:2.40px;top:1065.80px;white-space:pre;font-size:10.5px;letter-spacing:0.025px;">Ready</div>
<div style="position:absolute;left:1742px;top:1062px;width:75px;height:18px;border-top:1px solid #98aed0;border-left:1px solid #98aed0;border-right:1px solid #98aed0;"></div>
<div style="position:absolute;left:1820px;top:1062px;width:28px;height:18px;border-top:1px solid #98aed0;border-left:1px solid #98aed0;border-right:1px solid #98aed0;"></div>
<div style="position:absolute;left:1851px;top:1062px;width:33px;height:18px;border-top:1px solid #98aed0;border-left:1px solid #98aed0;border-right:1px solid #98aed0;"></div>
<div style="position:absolute;left:1887px;top:1062px;width:33px;height:18px;border-top:1px solid #98aed0;border-left:1px solid #98aed0;border-right:1px solid #98aed0;"></div>
<div style="position:absolute;left:1853.30px;top:1065.50px;white-space:pre;font-size:11.5px;letter-spacing:0.550px;">NUM</div>
<div style="position:absolute;left:0px;top:1078px;width:1920px;height:2px;background:#3c3c3c;"></div>
</body></html>
